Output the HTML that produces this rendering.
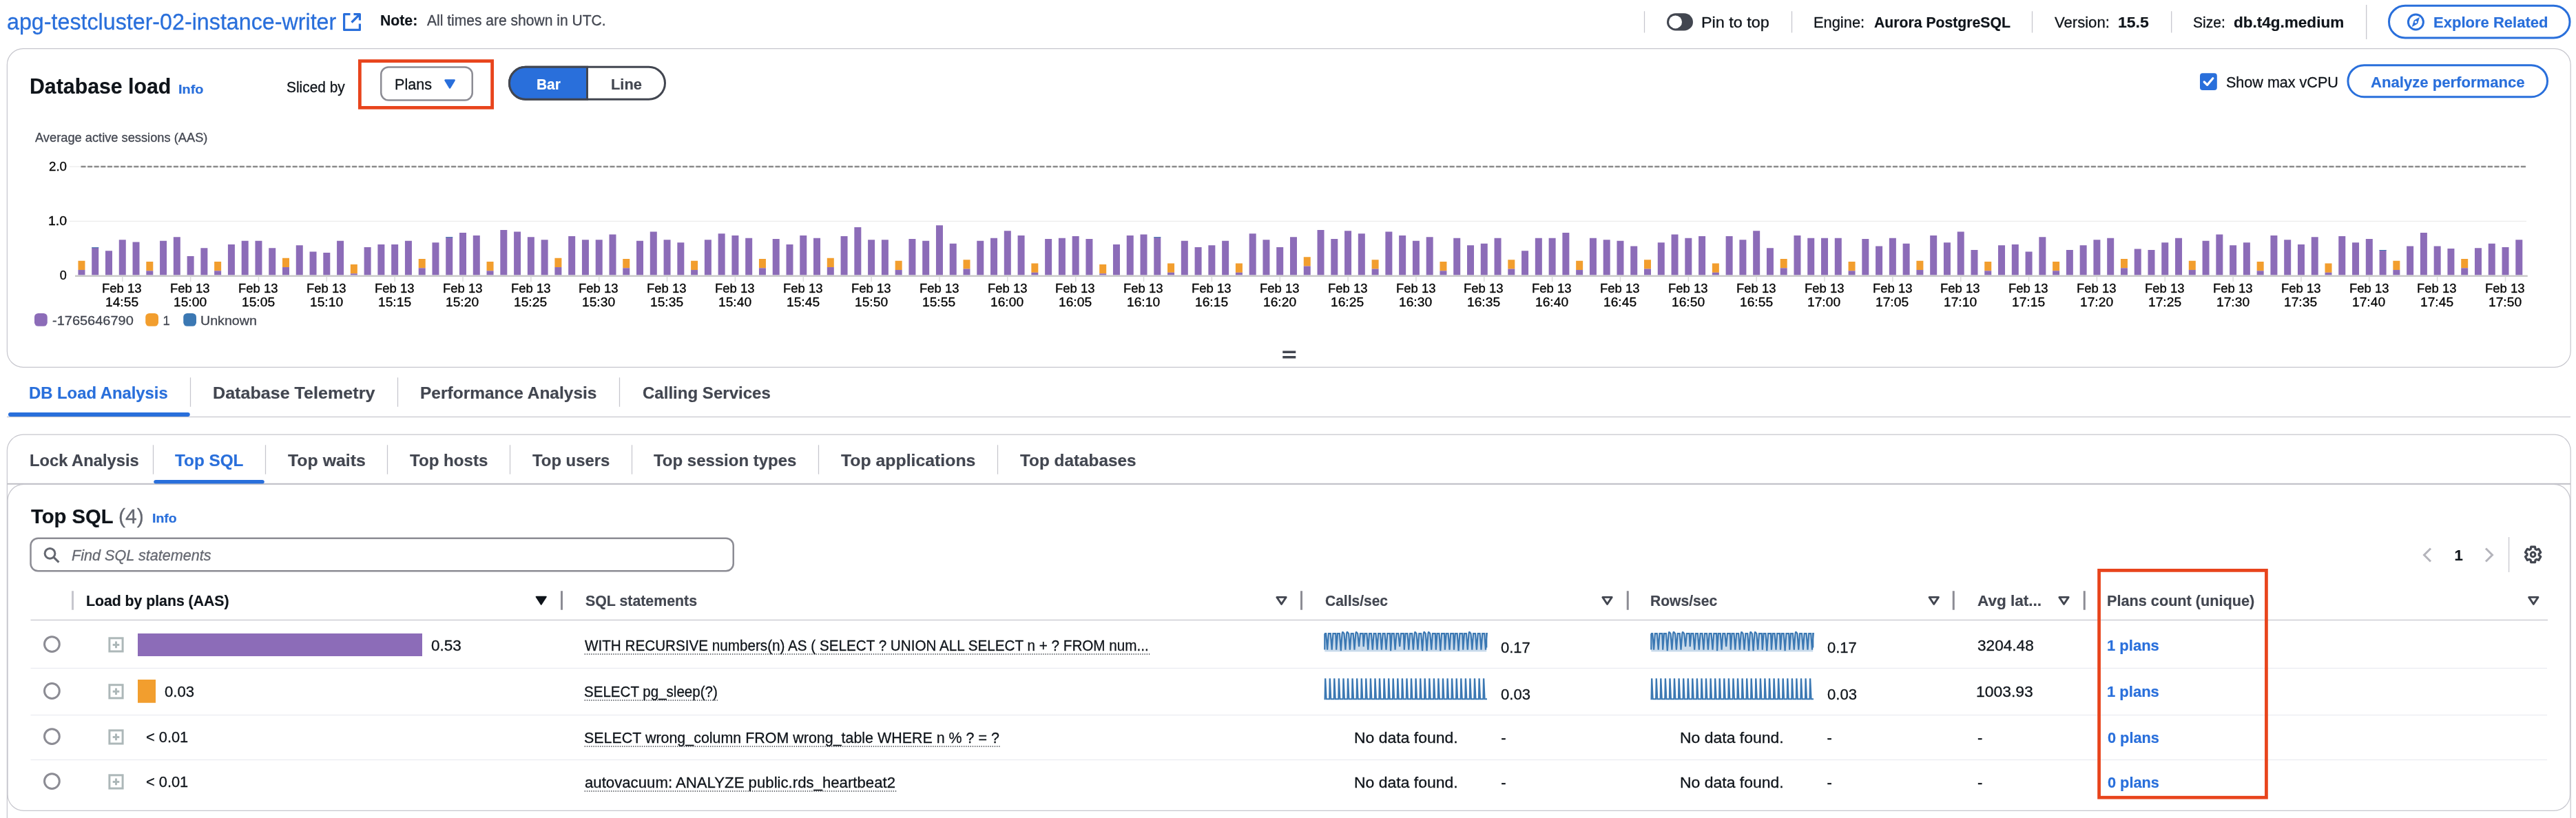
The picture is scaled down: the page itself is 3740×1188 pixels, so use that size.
<!DOCTYPE html><html lang="en"><head><meta charset="utf-8"><title>Database load - Top SQL</title><style>

html,body{margin:0;padding:0;background:#fff;}
body{width:3740px;height:1188px;position:relative;overflow:hidden;font-family:"Liberation Sans",Arial,sans-serif;}
.a{position:absolute;box-sizing:border-box;}
.t{white-space:pre;}

</style></head><body>
<svg class="a" style="left:0;top:0" width="3740" height="1188" viewBox="0 0 3740 1188">
<g transform="translate(496.00 17.00)"><path d="M12.5 3.6H3.6V26.4H26.4V17.5" fill="none" stroke="#296fdb" stroke-width="3.2" stroke-linejoin="round"/><path d="M17.5 3.6H26.4V12.5M26.4 3.6L14.5 15.5" fill="none" stroke="#296fdb" stroke-width="3.2" stroke-linejoin="round"/></g>
<rect x="2386.88" y="16.25" width="1.25" height="31.25" rx="0.00" fill="#c6c6cd" />
<rect x="2600.88" y="16.25" width="1.25" height="31.25" rx="0.00" fill="#c6c6cd" />
<rect x="2949.88" y="16.25" width="1.25" height="31.25" rx="0.00" fill="#c6c6cd" />
<rect x="3152.07" y="16.25" width="1.25" height="31.25" rx="0.00" fill="#c6c6cd" />
<rect x="3435.07" y="7.00" width="1.25" height="50.00" rx="0.00" fill="#c6c6cd" />
<rect x="2420.00" y="19.25" width="38.00" height="25.25" rx="13.00" fill="#424650" />
<rect x="2423.00" y="22.40" width="19.00" height="19.00" rx="10.00" fill="#fff" />
<rect x="3468.50" y="8.30" width="262.50" height="46.70" rx="23.50" fill="#fff" stroke="#296fdb" stroke-width="3" />
<g transform="translate(3493.40 18.00)"><circle cx="14" cy="14" r="11" fill="none" stroke="#296fdb" stroke-width="3"/><path d="M19 7.6L16.3 16.3L9 20.4L11.7 11.7Z" fill="#296fdb" stroke="#296fdb" stroke-width="0.8" stroke-linejoin="round"/><circle cx="14" cy="14" r="1.8" fill="#fff"/></g>
<rect x="10.35" y="70.60" width="3721.80" height="462.80" rx="23.40" fill="#fff" stroke="#c6c6cd" stroke-width="1.2" />
<rect x="522.38" y="88.62" width="192.25" height="67.75" rx="0.00" fill="none" stroke="#e8441c" stroke-width="4.75" />
<rect x="553.25" y="97.50" width="132.50" height="48.00" rx="10.75" fill="#fff" stroke="#8c8c94" stroke-width="2.5" />
<g transform="translate(643.00 113.00)"><path d="M3.6 3.6H16.6L10.1 14.4Z" fill="#296fdb" stroke="#296fdb" stroke-width="2.6" stroke-linejoin="round"/></g>
<rect x="739.50" y="97.25" width="226.00" height="47.00" rx="23.50" fill="#fff" stroke="#424650" stroke-width="3" />
<path d="M852.5 97.25H763A23.5 23.5 0 0 0 763 144.25H852.5Z" fill="#296fdb" stroke="#424650" stroke-width="3"/>
<rect x="3194.00" y="106.20" width="24.80" height="24.80" rx="4.00" fill="#296fdb" />
<g transform="translate(3194.00 106.20)"><path d="M6.2 12.8L10.6 17.2L18.8 7.6" fill="none" stroke="#fff" stroke-width="3.2" stroke-linecap="round" stroke-linejoin="round"/></g>
<rect x="3408.90" y="94.70" width="289.60" height="46.00" rx="23.50" fill="#fff" stroke="#296fdb" stroke-width="3" />
<rect x="101.00" y="241.50" width="3567.00" height="1.00" rx="0.00" fill="#e6e6e6" />
<rect x="101.00" y="320.75" width="3567.00" height="1.00" rx="0.00" fill="#e6e6e6" />
<g transform="translate(0.00 0.00)"><line x1="117.5" y1="242" x2="3668" y2="242" stroke="#8a8a8a" stroke-width="2.3" stroke-dasharray="7 2.6"/><rect x="113.45" y="378.75" width="10" height="13.30" fill="#f29e2e"/><rect x="113.45" y="392.05" width="10" height="7.45" fill="#8c6cb8"/><rect x="133.22" y="359.25" width="10" height="40.25" fill="#8c6cb8"/><rect x="133.22" y="359.25" width="10" height="1" fill="#3b78b3"/><rect x="152.99" y="364.25" width="10" height="35.25" fill="#8c6cb8"/><rect x="172.76" y="348.25" width="10" height="51.25" fill="#8c6cb8"/><rect x="192.53" y="351.50" width="10" height="48.00" fill="#8c6cb8"/><rect x="212.30" y="380.00" width="10" height="13.30" fill="#f29e2e"/><rect x="212.30" y="393.30" width="10" height="6.20" fill="#8c6cb8"/><rect x="232.07" y="349.75" width="10" height="49.75" fill="#8c6cb8"/><rect x="251.84" y="344.25" width="10" height="55.25" fill="#8c6cb8"/><rect x="271.61" y="372.00" width="10" height="27.50" fill="#8c6cb8"/><rect x="291.38" y="360.25" width="10" height="39.25" fill="#8c6cb8"/><rect x="311.15" y="380.00" width="10" height="13.30" fill="#f29e2e"/><rect x="311.15" y="393.30" width="10" height="6.20" fill="#8c6cb8"/><rect x="330.92" y="355.00" width="10" height="44.50" fill="#8c6cb8"/><rect x="350.69" y="349.75" width="10" height="49.75" fill="#8c6cb8"/><rect x="370.46" y="349.75" width="10" height="49.75" fill="#8c6cb8"/><rect x="390.23" y="360.25" width="10" height="39.25" fill="#8c6cb8"/><rect x="410.00" y="374.75" width="10" height="13.30" fill="#f29e2e"/><rect x="410.00" y="388.05" width="10" height="11.45" fill="#8c6cb8"/><rect x="429.77" y="356.25" width="10" height="43.25" fill="#8c6cb8"/><rect x="449.54" y="365.50" width="10" height="34.00" fill="#8c6cb8"/><rect x="469.31" y="367.00" width="10" height="32.50" fill="#8c6cb8"/><rect x="489.08" y="349.75" width="10" height="49.75" fill="#8c6cb8"/><rect x="508.85" y="384.00" width="10" height="13.30" fill="#f29e2e"/><rect x="508.85" y="397.30" width="10" height="2.20" fill="#8c6cb8"/><rect x="528.62" y="359.00" width="10" height="40.50" fill="#8c6cb8"/><rect x="548.39" y="355.00" width="10" height="44.50" fill="#8c6cb8"/><rect x="568.16" y="355.00" width="10" height="44.50" fill="#8c6cb8"/><rect x="587.93" y="349.75" width="10" height="49.75" fill="#8c6cb8"/><rect x="607.70" y="376.00" width="10" height="13.30" fill="#f29e2e"/><rect x="607.70" y="389.30" width="10" height="10.20" fill="#8c6cb8"/><rect x="627.47" y="352.25" width="10" height="47.25" fill="#8c6cb8"/><rect x="647.24" y="344.25" width="10" height="55.25" fill="#8c6cb8"/><rect x="647.24" y="344.25" width="10" height="1" fill="#3b78b3"/><rect x="667.01" y="338.00" width="10" height="61.50" fill="#8c6cb8"/><rect x="686.78" y="342.00" width="10" height="57.50" fill="#8c6cb8"/><rect x="706.55" y="380.00" width="10" height="13.30" fill="#f29e2e"/><rect x="706.55" y="393.30" width="10" height="6.20" fill="#8c6cb8"/><rect x="726.32" y="334.00" width="10" height="65.50" fill="#8c6cb8"/><rect x="746.09" y="336.50" width="10" height="63.00" fill="#8c6cb8"/><rect x="765.86" y="344.25" width="10" height="55.25" fill="#8c6cb8"/><rect x="785.63" y="348.25" width="10" height="51.25" fill="#8c6cb8"/><rect x="805.40" y="374.75" width="10" height="13.30" fill="#f29e2e"/><rect x="805.40" y="388.05" width="10" height="11.45" fill="#8c6cb8"/><rect x="825.17" y="343.00" width="10" height="56.50" fill="#8c6cb8"/><rect x="844.94" y="348.25" width="10" height="51.25" fill="#8c6cb8"/><rect x="864.71" y="348.25" width="10" height="51.25" fill="#8c6cb8"/><rect x="884.48" y="340.50" width="10" height="59.00" fill="#8c6cb8"/><rect x="904.25" y="376.00" width="10" height="13.30" fill="#f29e2e"/><rect x="904.25" y="389.30" width="10" height="10.20" fill="#8c6cb8"/><rect x="924.02" y="349.75" width="10" height="49.75" fill="#8c6cb8"/><rect x="943.79" y="336.50" width="10" height="63.00" fill="#8c6cb8"/><rect x="963.56" y="348.25" width="10" height="51.25" fill="#8c6cb8"/><rect x="983.33" y="352.25" width="10" height="47.25" fill="#8c6cb8"/><rect x="1003.10" y="378.75" width="10" height="13.30" fill="#f29e2e"/><rect x="1003.10" y="392.05" width="10" height="7.45" fill="#8c6cb8"/><rect x="1022.87" y="348.25" width="10" height="51.25" fill="#8c6cb8"/><rect x="1042.64" y="339.25" width="10" height="60.25" fill="#8c6cb8"/><rect x="1062.41" y="342.00" width="10" height="57.50" fill="#8c6cb8"/><rect x="1082.18" y="345.75" width="10" height="53.75" fill="#8c6cb8"/><rect x="1101.95" y="376.00" width="10" height="13.30" fill="#f29e2e"/><rect x="1101.95" y="389.30" width="10" height="10.20" fill="#8c6cb8"/><rect x="1121.72" y="347.00" width="10" height="52.50" fill="#8c6cb8"/><rect x="1141.49" y="355.00" width="10" height="44.50" fill="#8c6cb8"/><rect x="1161.26" y="342.00" width="10" height="57.50" fill="#8c6cb8"/><rect x="1181.03" y="345.75" width="10" height="53.75" fill="#8c6cb8"/><rect x="1200.80" y="374.75" width="10" height="13.30" fill="#f29e2e"/><rect x="1200.80" y="388.05" width="10" height="11.45" fill="#8c6cb8"/><rect x="1220.57" y="343.00" width="10" height="56.50" fill="#8c6cb8"/><rect x="1240.34" y="330.00" width="10" height="69.50" fill="#8c6cb8"/><rect x="1260.11" y="348.25" width="10" height="51.25" fill="#8c6cb8"/><rect x="1279.88" y="348.25" width="10" height="51.25" fill="#8c6cb8"/><rect x="1299.65" y="378.75" width="10" height="13.30" fill="#f29e2e"/><rect x="1299.65" y="392.05" width="10" height="7.45" fill="#8c6cb8"/><rect x="1319.42" y="347.00" width="10" height="52.50" fill="#8c6cb8"/><rect x="1339.19" y="349.75" width="10" height="49.75" fill="#8c6cb8"/><rect x="1358.96" y="327.25" width="10" height="72.25" fill="#8c6cb8"/><rect x="1378.73" y="353.75" width="10" height="45.75" fill="#8c6cb8"/><rect x="1398.50" y="377.25" width="10" height="13.30" fill="#f29e2e"/><rect x="1398.50" y="390.55" width="10" height="8.95" fill="#8c6cb8"/><rect x="1418.27" y="349.75" width="10" height="49.75" fill="#8c6cb8"/><rect x="1438.04" y="345.75" width="10" height="53.75" fill="#8c6cb8"/><rect x="1457.81" y="335.25" width="10" height="64.25" fill="#8c6cb8"/><rect x="1477.58" y="342.00" width="10" height="57.50" fill="#8c6cb8"/><rect x="1497.35" y="382.50" width="10" height="13.30" fill="#f29e2e"/><rect x="1497.35" y="395.80" width="10" height="3.70" fill="#8c6cb8"/><rect x="1517.12" y="347.00" width="10" height="52.50" fill="#8c6cb8"/><rect x="1536.89" y="345.75" width="10" height="53.75" fill="#8c6cb8"/><rect x="1556.66" y="343.00" width="10" height="56.50" fill="#8c6cb8"/><rect x="1576.43" y="347.00" width="10" height="52.50" fill="#8c6cb8"/><rect x="1596.20" y="384.00" width="10" height="13.30" fill="#f29e2e"/><rect x="1596.20" y="397.30" width="10" height="2.20" fill="#8c6cb8"/><rect x="1615.97" y="355.00" width="10" height="44.50" fill="#8c6cb8"/><rect x="1635.74" y="342.00" width="10" height="57.50" fill="#8c6cb8"/><rect x="1655.51" y="340.50" width="10" height="59.00" fill="#8c6cb8"/><rect x="1675.28" y="344.25" width="10" height="55.25" fill="#8c6cb8"/><rect x="1675.28" y="344.25" width="10" height="1" fill="#3b78b3"/><rect x="1695.05" y="382.50" width="10" height="13.30" fill="#f29e2e"/><rect x="1695.05" y="395.80" width="10" height="3.70" fill="#8c6cb8"/><rect x="1714.82" y="349.75" width="10" height="49.75" fill="#8c6cb8"/><rect x="1734.59" y="359.00" width="10" height="40.50" fill="#8c6cb8"/><rect x="1754.36" y="356.25" width="10" height="43.25" fill="#8c6cb8"/><rect x="1774.13" y="349.75" width="10" height="49.75" fill="#8c6cb8"/><rect x="1793.90" y="382.50" width="10" height="13.30" fill="#f29e2e"/><rect x="1793.90" y="395.80" width="10" height="3.70" fill="#8c6cb8"/><rect x="1813.67" y="339.25" width="10" height="60.25" fill="#8c6cb8"/><rect x="1833.44" y="348.25" width="10" height="51.25" fill="#8c6cb8"/><rect x="1853.21" y="359.00" width="10" height="40.50" fill="#8c6cb8"/><rect x="1872.98" y="344.25" width="10" height="55.25" fill="#8c6cb8"/><rect x="1892.75" y="373.25" width="10" height="13.30" fill="#f29e2e"/><rect x="1892.75" y="386.55" width="10" height="12.95" fill="#8c6cb8"/><rect x="1912.52" y="334.00" width="10" height="65.50" fill="#8c6cb8"/><rect x="1932.29" y="347.00" width="10" height="52.50" fill="#8c6cb8"/><rect x="1952.06" y="335.25" width="10" height="64.25" fill="#8c6cb8"/><rect x="1971.83" y="339.25" width="10" height="60.25" fill="#8c6cb8"/><rect x="1991.60" y="377.25" width="10" height="13.30" fill="#f29e2e"/><rect x="1991.60" y="390.55" width="10" height="8.95" fill="#8c6cb8"/><rect x="2011.37" y="336.50" width="10" height="63.00" fill="#8c6cb8"/><rect x="2031.14" y="342.00" width="10" height="57.50" fill="#8c6cb8"/><rect x="2050.91" y="349.75" width="10" height="49.75" fill="#8c6cb8"/><rect x="2070.68" y="344.25" width="10" height="55.25" fill="#8c6cb8"/><rect x="2090.45" y="380.00" width="10" height="13.30" fill="#f29e2e"/><rect x="2090.45" y="393.30" width="10" height="6.20" fill="#8c6cb8"/><rect x="2110.22" y="345.75" width="10" height="53.75" fill="#8c6cb8"/><rect x="2129.99" y="356.25" width="10" height="43.25" fill="#8c6cb8"/><rect x="2149.76" y="353.75" width="10" height="45.75" fill="#8c6cb8"/><rect x="2169.53" y="345.75" width="10" height="53.75" fill="#8c6cb8"/><rect x="2189.30" y="377.25" width="10" height="13.30" fill="#f29e2e"/><rect x="2189.30" y="390.55" width="10" height="8.95" fill="#8c6cb8"/><rect x="2209.07" y="364.25" width="10" height="35.25" fill="#8c6cb8"/><rect x="2228.84" y="345.75" width="10" height="53.75" fill="#8c6cb8"/><rect x="2248.61" y="345.75" width="10" height="53.75" fill="#8c6cb8"/><rect x="2268.38" y="338.00" width="10" height="61.50" fill="#8c6cb8"/><rect x="2288.15" y="378.75" width="10" height="13.30" fill="#f29e2e"/><rect x="2288.15" y="392.05" width="10" height="7.45" fill="#8c6cb8"/><rect x="2307.92" y="345.75" width="10" height="53.75" fill="#8c6cb8"/><rect x="2327.69" y="348.25" width="10" height="51.25" fill="#8c6cb8"/><rect x="2347.46" y="349.75" width="10" height="49.75" fill="#8c6cb8"/><rect x="2367.23" y="357.50" width="10" height="42.00" fill="#8c6cb8"/><rect x="2387.00" y="377.25" width="10" height="13.30" fill="#f29e2e"/><rect x="2387.00" y="390.55" width="10" height="8.95" fill="#8c6cb8"/><rect x="2406.77" y="352.25" width="10" height="47.25" fill="#8c6cb8"/><rect x="2426.54" y="340.50" width="10" height="59.00" fill="#8c6cb8"/><rect x="2446.31" y="345.75" width="10" height="53.75" fill="#8c6cb8"/><rect x="2466.08" y="343.00" width="10" height="56.50" fill="#8c6cb8"/><rect x="2485.85" y="382.50" width="10" height="13.30" fill="#f29e2e"/><rect x="2485.85" y="395.80" width="10" height="3.70" fill="#8c6cb8"/><rect x="2505.62" y="343.00" width="10" height="56.50" fill="#8c6cb8"/><rect x="2525.39" y="348.25" width="10" height="51.25" fill="#8c6cb8"/><rect x="2545.16" y="335.25" width="10" height="64.25" fill="#8c6cb8"/><rect x="2564.93" y="360.25" width="10" height="39.25" fill="#8c6cb8"/><rect x="2584.70" y="376.00" width="10" height="13.30" fill="#f29e2e"/><rect x="2584.70" y="389.30" width="10" height="10.20" fill="#8c6cb8"/><rect x="2604.47" y="342.00" width="10" height="57.50" fill="#8c6cb8"/><rect x="2624.24" y="345.75" width="10" height="53.75" fill="#8c6cb8"/><rect x="2644.01" y="345.75" width="10" height="53.75" fill="#8c6cb8"/><rect x="2663.78" y="345.75" width="10" height="53.75" fill="#8c6cb8"/><rect x="2683.55" y="380.00" width="10" height="13.30" fill="#f29e2e"/><rect x="2683.55" y="393.30" width="10" height="6.20" fill="#8c6cb8"/><rect x="2703.32" y="347.00" width="10" height="52.50" fill="#8c6cb8"/><rect x="2723.09" y="357.50" width="10" height="42.00" fill="#8c6cb8"/><rect x="2742.86" y="345.75" width="10" height="53.75" fill="#8c6cb8"/><rect x="2762.63" y="353.75" width="10" height="45.75" fill="#8c6cb8"/><rect x="2782.40" y="378.75" width="10" height="13.30" fill="#f29e2e"/><rect x="2782.40" y="392.05" width="10" height="7.45" fill="#8c6cb8"/><rect x="2802.17" y="342.00" width="10" height="57.50" fill="#8c6cb8"/><rect x="2821.94" y="352.25" width="10" height="47.25" fill="#8c6cb8"/><rect x="2841.71" y="336.50" width="10" height="63.00" fill="#8c6cb8"/><rect x="2861.48" y="363.00" width="10" height="36.50" fill="#8c6cb8"/><rect x="2881.25" y="380.00" width="10" height="13.30" fill="#f29e2e"/><rect x="2881.25" y="393.30" width="10" height="6.20" fill="#8c6cb8"/><rect x="2901.02" y="356.25" width="10" height="43.25" fill="#8c6cb8"/><rect x="2920.79" y="355.00" width="10" height="44.50" fill="#8c6cb8"/><rect x="2940.56" y="365.50" width="10" height="34.00" fill="#8c6cb8"/><rect x="2960.33" y="344.25" width="10" height="55.25" fill="#8c6cb8"/><rect x="2980.10" y="380.00" width="10" height="13.30" fill="#f29e2e"/><rect x="2980.10" y="393.30" width="10" height="6.20" fill="#8c6cb8"/><rect x="2999.87" y="363.00" width="10" height="36.50" fill="#8c6cb8"/><rect x="3019.64" y="356.25" width="10" height="43.25" fill="#8c6cb8"/><rect x="3039.41" y="348.25" width="10" height="51.25" fill="#8c6cb8"/><rect x="3059.18" y="345.75" width="10" height="53.75" fill="#8c6cb8"/><rect x="3078.95" y="376.00" width="10" height="13.30" fill="#f29e2e"/><rect x="3078.95" y="389.30" width="10" height="10.20" fill="#8c6cb8"/><rect x="3098.72" y="361.50" width="10" height="38.00" fill="#8c6cb8"/><rect x="3118.49" y="363.00" width="10" height="36.50" fill="#8c6cb8"/><rect x="3138.26" y="352.25" width="10" height="47.25" fill="#8c6cb8"/><rect x="3158.03" y="345.75" width="10" height="53.75" fill="#8c6cb8"/><rect x="3177.80" y="378.75" width="10" height="13.30" fill="#f29e2e"/><rect x="3177.80" y="392.05" width="10" height="7.45" fill="#8c6cb8"/><rect x="3197.57" y="349.75" width="10" height="49.75" fill="#8c6cb8"/><rect x="3217.34" y="340.50" width="10" height="59.00" fill="#8c6cb8"/><rect x="3237.11" y="356.25" width="10" height="43.25" fill="#8c6cb8"/><rect x="3256.88" y="352.25" width="10" height="47.25" fill="#8c6cb8"/><rect x="3276.65" y="380.00" width="10" height="13.30" fill="#f29e2e"/><rect x="3276.65" y="393.30" width="10" height="6.20" fill="#8c6cb8"/><rect x="3296.42" y="342.00" width="10" height="57.50" fill="#8c6cb8"/><rect x="3316.19" y="348.25" width="10" height="51.25" fill="#8c6cb8"/><rect x="3335.96" y="355.00" width="10" height="44.50" fill="#8c6cb8"/><rect x="3355.73" y="344.25" width="10" height="55.25" fill="#8c6cb8"/><rect x="3375.50" y="382.50" width="10" height="13.30" fill="#f29e2e"/><rect x="3375.50" y="395.80" width="10" height="3.70" fill="#8c6cb8"/><rect x="3395.27" y="343.00" width="10" height="56.50" fill="#8c6cb8"/><rect x="3415.04" y="352.25" width="10" height="47.25" fill="#8c6cb8"/><rect x="3434.81" y="347.00" width="10" height="52.50" fill="#8c6cb8"/><rect x="3454.58" y="363.00" width="10" height="36.50" fill="#8c6cb8"/><rect x="3454.58" y="363.00" width="10" height="1" fill="#3b78b3"/><rect x="3474.35" y="378.75" width="10" height="13.30" fill="#f29e2e"/><rect x="3474.35" y="392.05" width="10" height="7.45" fill="#8c6cb8"/><rect x="3494.12" y="357.50" width="10" height="42.00" fill="#8c6cb8"/><rect x="3513.89" y="338.00" width="10" height="61.50" fill="#8c6cb8"/><rect x="3533.66" y="357.50" width="10" height="42.00" fill="#8c6cb8"/><rect x="3553.43" y="361.00" width="10" height="38.50" fill="#8c6cb8"/><rect x="3573.20" y="376.00" width="10" height="13.30" fill="#f29e2e"/><rect x="3573.20" y="389.30" width="10" height="10.20" fill="#8c6cb8"/><rect x="3592.97" y="360.25" width="10" height="39.25" fill="#8c6cb8"/><rect x="3612.74" y="353.75" width="10" height="45.75" fill="#8c6cb8"/><rect x="3632.51" y="359.00" width="10" height="40.50" fill="#8c6cb8"/><rect x="3652.28" y="348.25" width="10" height="51.25" fill="#8c6cb8"/><rect x="109" y="399.6" width="3560.75" height="2.4" fill="#c8c8c8"/><rect x="177.01" y="401.5" width="1.5" height="7.5" fill="#dcdcdc"/><rect x="275.86" y="401.5" width="1.5" height="7.5" fill="#dcdcdc"/><rect x="374.71" y="401.5" width="1.5" height="7.5" fill="#dcdcdc"/><rect x="473.56" y="401.5" width="1.5" height="7.5" fill="#dcdcdc"/><rect x="572.41" y="401.5" width="1.5" height="7.5" fill="#dcdcdc"/><rect x="671.26" y="401.5" width="1.5" height="7.5" fill="#dcdcdc"/><rect x="770.11" y="401.5" width="1.5" height="7.5" fill="#dcdcdc"/><rect x="868.96" y="401.5" width="1.5" height="7.5" fill="#dcdcdc"/><rect x="967.81" y="401.5" width="1.5" height="7.5" fill="#dcdcdc"/><rect x="1066.66" y="401.5" width="1.5" height="7.5" fill="#dcdcdc"/><rect x="1165.51" y="401.5" width="1.5" height="7.5" fill="#dcdcdc"/><rect x="1264.36" y="401.5" width="1.5" height="7.5" fill="#dcdcdc"/><rect x="1363.21" y="401.5" width="1.5" height="7.5" fill="#dcdcdc"/><rect x="1462.06" y="401.5" width="1.5" height="7.5" fill="#dcdcdc"/><rect x="1560.91" y="401.5" width="1.5" height="7.5" fill="#dcdcdc"/><rect x="1659.76" y="401.5" width="1.5" height="7.5" fill="#dcdcdc"/><rect x="1758.61" y="401.5" width="1.5" height="7.5" fill="#dcdcdc"/><rect x="1857.46" y="401.5" width="1.5" height="7.5" fill="#dcdcdc"/><rect x="1956.31" y="401.5" width="1.5" height="7.5" fill="#dcdcdc"/><rect x="2055.16" y="401.5" width="1.5" height="7.5" fill="#dcdcdc"/><rect x="2154.01" y="401.5" width="1.5" height="7.5" fill="#dcdcdc"/><rect x="2252.86" y="401.5" width="1.5" height="7.5" fill="#dcdcdc"/><rect x="2351.71" y="401.5" width="1.5" height="7.5" fill="#dcdcdc"/><rect x="2450.56" y="401.5" width="1.5" height="7.5" fill="#dcdcdc"/><rect x="2549.41" y="401.5" width="1.5" height="7.5" fill="#dcdcdc"/><rect x="2648.26" y="401.5" width="1.5" height="7.5" fill="#dcdcdc"/><rect x="2747.11" y="401.5" width="1.5" height="7.5" fill="#dcdcdc"/><rect x="2845.96" y="401.5" width="1.5" height="7.5" fill="#dcdcdc"/><rect x="2944.81" y="401.5" width="1.5" height="7.5" fill="#dcdcdc"/><rect x="3043.66" y="401.5" width="1.5" height="7.5" fill="#dcdcdc"/><rect x="3142.51" y="401.5" width="1.5" height="7.5" fill="#dcdcdc"/><rect x="3241.36" y="401.5" width="1.5" height="7.5" fill="#dcdcdc"/><rect x="3340.21" y="401.5" width="1.5" height="7.5" fill="#dcdcdc"/><rect x="3439.06" y="401.5" width="1.5" height="7.5" fill="#dcdcdc"/><rect x="3537.91" y="401.5" width="1.5" height="7.5" fill="#dcdcdc"/><rect x="3636.76" y="401.5" width="1.5" height="7.5" fill="#dcdcdc"/></g>
<rect x="50.00" y="455.00" width="18.75" height="18.75" rx="5.50" fill="#8c6cb8" />
<rect x="211.25" y="455.00" width="18.75" height="18.75" rx="5.50" fill="#f29e2e" />
<rect x="266.25" y="455.00" width="18.75" height="18.75" rx="5.50" fill="#3b78b3" />
<rect x="1862.25" y="509.50" width="19.00" height="3.50" rx="0.00" fill="#424650" />
<rect x="1862.25" y="517.00" width="19.00" height="3.50" rx="0.00" fill="#424650" />
<rect x="275.88" y="548.25" width="1.25" height="42.50" rx="0.00" fill="#c6c6cd" />
<rect x="576.88" y="548.25" width="1.25" height="42.50" rx="0.00" fill="#c6c6cd" />
<rect x="898.88" y="548.25" width="1.25" height="42.50" rx="0.00" fill="#c6c6cd" />
<rect x="10.00" y="604.90" width="3722.00" height="1.20" rx="0.00" fill="#c6c6cd" />
<rect x="12.00" y="599.00" width="263.75" height="6.00" rx="3.00" fill="#296fdb" />
<rect x="10.35" y="631.10" width="3721.80" height="618.80" rx="23.40" fill="#fff" stroke="#c6c6cd" stroke-width="1.2" />
<rect x="221.88" y="646.25" width="1.25" height="42.50" rx="0.00" fill="#c6c6cd" />
<rect x="384.88" y="646.25" width="1.25" height="42.50" rx="0.00" fill="#c6c6cd" />
<rect x="561.88" y="646.25" width="1.25" height="42.50" rx="0.00" fill="#c6c6cd" />
<rect x="739.88" y="646.25" width="1.25" height="42.50" rx="0.00" fill="#c6c6cd" />
<rect x="916.88" y="646.25" width="1.25" height="42.50" rx="0.00" fill="#c6c6cd" />
<rect x="1187.88" y="646.25" width="1.25" height="42.50" rx="0.00" fill="#c6c6cd" />
<rect x="1447.88" y="646.25" width="1.25" height="42.50" rx="0.00" fill="#c6c6cd" />
<rect x="10.50" y="701.80" width="3721.50" height="1.90" rx="0.00" fill="#bcbcc4" />
<rect x="223.25" y="697.00" width="160.50" height="5.50" rx="3.00" fill="#296fdb" />
<rect x="11.10" y="703.35" width="3720.30" height="474.05" rx="23.40" fill="#fff" stroke="#c6c6cd" stroke-width="1.2" />
<rect x="44.50" y="781.75" width="1020.25" height="47.50" rx="10.75" fill="#fff" stroke="#8c8c94" stroke-width="2.5" />
<g transform="translate(60.00 791.00)"><circle cx="12.5" cy="12.8" r="7.4" fill="none" stroke="#656871" stroke-width="3"/><path d="M18 18.4L25.4 25.6" stroke="#656871" stroke-width="3.2" fill="none"/></g>
<g transform="translate(3514.00 791.00)"><path d="M15 5.5L5.5 15L15 24.5" fill="none" stroke="#b4b4bb" stroke-width="3"/></g>
<g transform="translate(3604.00 791.00)"><path d="M5 5.5L14.5 15L5 24.5" fill="none" stroke="#b4b4bb" stroke-width="3"/></g>
<rect x="3641.97" y="780.00" width="1.25" height="51.00" rx="0.00" fill="#c6c6cd" />
<g transform="translate(3662.60 790.40)"><path d="M12.13 3.76L17.87 3.76L18.43 7.11L20.12 8.09L23.30 6.89L26.17 11.87L23.54 14.03L23.54 15.97L26.17 18.13L23.30 23.11L20.12 21.91L18.43 22.89L17.87 26.24L12.13 26.24L11.57 22.89L9.88 21.91L6.70 23.11L3.83 18.13L6.46 15.97L6.46 14.03L3.83 11.87L6.70 6.89L9.88 8.09L11.57 7.11Z" fill="none" stroke="#424650" stroke-width="3.2" stroke-linejoin="round"/><circle cx="15" cy="15" r="3.3" fill="none" stroke="#424650" stroke-width="3"/></g>
<rect x="104.00" y="858.25" width="3.00" height="27.50" rx="0.00" fill="#c6c6cd" />
<g transform="translate(775.00 863.00)"><path d="M3.6 3.8H17.8L10.7 14.6Z" fill="#0f141a" stroke="#0f141a" stroke-width="2" stroke-linejoin="round"/></g>
<rect x="814.00" y="858.25" width="3.00" height="27.50" rx="0.00" fill="#8c8c94" />
<rect x="1888.00" y="858.25" width="3.00" height="27.50" rx="0.00" fill="#8c8c94" />
<rect x="2361.75" y="858.25" width="3.00" height="27.50" rx="0.00" fill="#8c8c94" />
<rect x="2834.75" y="858.25" width="3.00" height="27.50" rx="0.00" fill="#8c8c94" />
<rect x="3024.75" y="858.25" width="3.00" height="27.50" rx="0.00" fill="#8c8c94" />
<g transform="translate(1850.00 863.00)"><path d="M3.8 4.4H17.2L10.5 14.4Z" fill="none" stroke="#424650" stroke-width="2.8" stroke-linejoin="round"/></g>
<g transform="translate(2323.00 863.00)"><path d="M3.8 4.4H17.2L10.5 14.4Z" fill="none" stroke="#424650" stroke-width="2.8" stroke-linejoin="round"/></g>
<g transform="translate(2797.25 863.00)"><path d="M3.8 4.4H17.2L10.5 14.4Z" fill="none" stroke="#424650" stroke-width="2.8" stroke-linejoin="round"/></g>
<g transform="translate(2986.00 863.00)"><path d="M3.8 4.4H17.2L10.5 14.4Z" fill="none" stroke="#424650" stroke-width="2.8" stroke-linejoin="round"/></g>
<g transform="translate(3667.80 863.00)"><path d="M3.8 4.4H17.2L10.5 14.4Z" fill="none" stroke="#424650" stroke-width="2.8" stroke-linejoin="round"/></g>
<rect x="44.50" y="899.85" width="3654.50" height="1.30" rx="0.00" fill="#c6c6cd" />
<rect x="44.50" y="969.90" width="3653.50" height="1.20" rx="0.00" fill="#e9ebf0" />
<rect x="44.50" y="1037.90" width="3653.50" height="1.20" rx="0.00" fill="#e9ebf0" />
<rect x="44.50" y="1102.90" width="3653.50" height="1.20" rx="0.00" fill="#e9ebf0" />
<rect x="64.50" y="924.70" width="21.80" height="21.80" rx="11.50" fill="#fff" stroke="#8c8c94" stroke-width="3" />
<g transform="translate(157.40 925.30)"><rect x="1.5" y="1.5" width="19.2" height="19.2" fill="#fff" stroke="#adb8b9" stroke-width="3"/><path d="M6.3 11.1H15.9M11.1 6.3V15.9" stroke="#adb8b9" stroke-width="3" fill="none"/></g>
<rect x="64.50" y="992.60" width="21.80" height="21.80" rx="11.50" fill="#fff" stroke="#8c8c94" stroke-width="3" />
<g transform="translate(157.40 993.20)"><rect x="1.5" y="1.5" width="19.2" height="19.2" fill="#fff" stroke="#adb8b9" stroke-width="3"/><path d="M6.3 11.1H15.9M11.1 6.3V15.9" stroke="#adb8b9" stroke-width="3" fill="none"/></g>
<rect x="64.50" y="1058.70" width="21.80" height="21.80" rx="11.50" fill="#fff" stroke="#8c8c94" stroke-width="3" />
<g transform="translate(157.40 1059.30)"><rect x="1.5" y="1.5" width="19.2" height="19.2" fill="#fff" stroke="#adb8b9" stroke-width="3"/><path d="M6.3 11.1H15.9M11.1 6.3V15.9" stroke="#adb8b9" stroke-width="3" fill="none"/></g>
<rect x="64.50" y="1123.70" width="21.80" height="21.80" rx="11.50" fill="#fff" stroke="#8c8c94" stroke-width="3" />
<g transform="translate(157.40 1124.30)"><rect x="1.5" y="1.5" width="19.2" height="19.2" fill="#fff" stroke="#adb8b9" stroke-width="3"/><path d="M6.3 11.1H15.9M11.1 6.3V15.9" stroke="#adb8b9" stroke-width="3" fill="none"/></g>
<rect x="200.00" y="920.00" width="413.00" height="33.00" rx="0.00" fill="#8c6cb8" />
<rect x="200.00" y="987.00" width="26.00" height="33.75" rx="0.00" fill="#f29e2e" />
<line x1="849.25" y1="950.00" x2="1670.75" y2="950.00" stroke="#1b2028" stroke-width="1.5" stroke-linecap="round" stroke-dasharray="0.1 3.1"/>
<line x1="849.25" y1="1017.00" x2="1041.25" y2="1017.00" stroke="#1b2028" stroke-width="1.5" stroke-linecap="round" stroke-dasharray="0.1 3.1"/>
<line x1="849.25" y1="1084.00" x2="1451.25" y2="1084.00" stroke="#1b2028" stroke-width="1.5" stroke-linecap="round" stroke-dasharray="0.1 3.1"/>
<line x1="849.25" y1="1149.00" x2="1301.25" y2="1149.00" stroke="#1b2028" stroke-width="1.5" stroke-linecap="round" stroke-dasharray="0.1 3.1"/>
<g transform="translate(1922.50 917.00)"><polygon points="0.8,29.6 0.8,26.6 0.8,3.2 0.5,3.2 2.7,3.2 4.6,26.6 6.4,3.2 7.1,3.2 9.3,3.2 11.2,26.6 12.9,3.2 13.6,3.2 16.8,3.2 17.7,26.6 19.5,3.2 20.2,3.2 22.4,3.2 24.3,28.2 26.1,3.2 26.8,0.6 29.0,3.2 30.9,26.6 32.6,3.2 33.3,0.6 35.6,3.2 37.4,26.6 39.2,3.2 39.9,3.2 42.2,3.2 44.0,26.6 45.8,3.2 46.5,0.6 48.7,3.2 50.6,22.1 52.4,3.2 53.1,3.2 56.2,3.2 57.2,22.1 58.9,3.2 59.6,3.2 61.9,3.2 63.7,26.6 65.5,3.2 66.2,3.2 68.4,3.2 70.3,26.6 72.1,3.2 72.8,3.2 75.0,3.2 76.9,26.6 78.6,3.2 79.3,3.2 81.6,3.2 83.4,26.6 85.2,3.2 85.9,3.2 88.1,3.2 90.0,26.6 91.8,3.2 92.5,3.2 95.6,3.2 96.6,28.2 98.3,3.2 99.0,3.2 101.3,3.2 103.1,26.6 104.9,3.2 105.6,3.2 107.8,3.2 109.7,22.1 111.5,3.2 112.2,3.2 115.3,3.2 116.3,26.6 118.0,3.2 118.8,3.2 121.0,3.2 122.8,26.6 124.6,3.2 125.3,3.2 127.6,3.2 129.4,26.6 131.2,3.2 131.9,0.6 134.1,3.2 136.0,26.6 137.8,3.2 138.5,3.2 140.7,3.2 142.6,28.2 144.3,3.2 145.0,0.6 147.3,3.2 149.1,28.2 150.9,3.2 151.6,0.6 153.8,3.2 155.7,26.6 157.5,3.2 158.2,3.2 161.3,3.2 162.3,26.6 164.0,3.2 164.7,3.2 167.0,3.2 168.8,28.2 170.6,3.2 171.3,3.2 174.5,3.2 175.4,26.6 177.2,3.2 177.9,3.2 180.1,3.2 182.0,26.6 183.7,3.2 184.4,3.2 187.6,3.2 188.5,26.6 190.3,3.2 191.0,3.2 193.2,3.2 195.1,28.2 196.9,3.2 197.6,3.2 200.7,3.2 201.7,26.6 203.5,3.2 204.2,3.2 206.4,3.2 208.3,26.6 210.0,3.2 210.7,0.6 213.0,3.2 214.8,26.6 216.6,3.2 217.3,3.2 219.5,3.2 221.4,26.6 223.2,3.2 223.9,3.2 226.1,3.2 228.0,26.6 229.7,3.2 230.4,3.2 232.7,3.2 234.5,26.6 236.3,3.2 235.7,3.2 235.7,23.6 235.7,29.6" fill="#c8daeb"/><polyline points="0.8,26.6 0.8,3.2 0.5,3.2 2.7,3.2 4.6,26.6 6.4,3.2 7.1,3.2 9.3,3.2 11.2,26.6 12.9,3.2 13.6,3.2 16.8,3.2 17.7,26.6 19.5,3.2 20.2,3.2 22.4,3.2 24.3,28.2 26.1,3.2 26.8,0.6 29.0,3.2 30.9,26.6 32.6,3.2 33.3,0.6 35.6,3.2 37.4,26.6 39.2,3.2 39.9,3.2 42.2,3.2 44.0,26.6 45.8,3.2 46.5,0.6 48.7,3.2 50.6,22.1 52.4,3.2 53.1,3.2 56.2,3.2 57.2,22.1 58.9,3.2 59.6,3.2 61.9,3.2 63.7,26.6 65.5,3.2 66.2,3.2 68.4,3.2 70.3,26.6 72.1,3.2 72.8,3.2 75.0,3.2 76.9,26.6 78.6,3.2 79.3,3.2 81.6,3.2 83.4,26.6 85.2,3.2 85.9,3.2 88.1,3.2 90.0,26.6 91.8,3.2 92.5,3.2 95.6,3.2 96.6,28.2 98.3,3.2 99.0,3.2 101.3,3.2 103.1,26.6 104.9,3.2 105.6,3.2 107.8,3.2 109.7,22.1 111.5,3.2 112.2,3.2 115.3,3.2 116.3,26.6 118.0,3.2 118.8,3.2 121.0,3.2 122.8,26.6 124.6,3.2 125.3,3.2 127.6,3.2 129.4,26.6 131.2,3.2 131.9,0.6 134.1,3.2 136.0,26.6 137.8,3.2 138.5,3.2 140.7,3.2 142.6,28.2 144.3,3.2 145.0,0.6 147.3,3.2 149.1,28.2 150.9,3.2 151.6,0.6 153.8,3.2 155.7,26.6 157.5,3.2 158.2,3.2 161.3,3.2 162.3,26.6 164.0,3.2 164.7,3.2 167.0,3.2 168.8,28.2 170.6,3.2 171.3,3.2 174.5,3.2 175.4,26.6 177.2,3.2 177.9,3.2 180.1,3.2 182.0,26.6 183.7,3.2 184.4,3.2 187.6,3.2 188.5,26.6 190.3,3.2 191.0,3.2 193.2,3.2 195.1,28.2 196.9,3.2 197.6,3.2 200.7,3.2 201.7,26.6 203.5,3.2 204.2,3.2 206.4,3.2 208.3,26.6 210.0,3.2 210.7,0.6 213.0,3.2 214.8,26.6 216.6,3.2 217.3,3.2 219.5,3.2 221.4,26.6 223.2,3.2 223.9,3.2 226.1,3.2 228.0,26.6 229.7,3.2 230.4,3.2 232.7,3.2 234.5,26.6 236.3,3.2 235.7,3.2 235.7,23.6" fill="none" stroke="#3b78b3" stroke-width="2.2" stroke-linejoin="miter" stroke-miterlimit="2"/></g>
<g transform="translate(2396.50 917.00)"><polygon points="0.8,29.6 0.8,26.6 0.8,3.2 0.5,3.2 2.7,3.2 4.6,26.6 6.4,3.2 7.1,3.2 9.3,3.2 11.2,26.6 12.9,3.2 13.6,3.2 16.8,3.2 17.7,26.6 19.5,3.2 20.2,3.2 22.4,3.2 24.3,28.2 26.1,3.2 26.8,0.6 29.0,3.2 30.9,26.6 32.6,3.2 33.3,0.6 35.6,3.2 37.4,26.6 39.2,3.2 39.9,3.2 42.2,3.2 44.0,26.6 45.8,3.2 46.5,0.6 48.7,3.2 50.6,22.1 52.4,3.2 53.1,3.2 56.2,3.2 57.2,22.1 58.9,3.2 59.6,3.2 61.9,3.2 63.7,26.6 65.5,3.2 66.2,3.2 68.4,3.2 70.3,26.6 72.1,3.2 72.8,3.2 75.0,3.2 76.9,26.6 78.6,3.2 79.3,3.2 81.6,3.2 83.4,26.6 85.2,3.2 85.9,3.2 88.1,3.2 90.0,26.6 91.8,3.2 92.5,3.2 95.6,3.2 96.6,28.2 98.3,3.2 99.0,3.2 101.3,3.2 103.1,26.6 104.9,3.2 105.6,3.2 107.8,3.2 109.7,22.1 111.5,3.2 112.2,3.2 115.3,3.2 116.3,26.6 118.0,3.2 118.8,3.2 121.0,3.2 122.8,26.6 124.6,3.2 125.3,3.2 127.6,3.2 129.4,26.6 131.2,3.2 131.9,0.6 134.1,3.2 136.0,26.6 137.8,3.2 138.5,3.2 140.7,3.2 142.6,28.2 144.3,3.2 145.0,0.6 147.3,3.2 149.1,28.2 150.9,3.2 151.6,0.6 153.8,3.2 155.7,26.6 157.5,3.2 158.2,3.2 161.3,3.2 162.3,26.6 164.0,3.2 164.7,3.2 167.0,3.2 168.8,28.2 170.6,3.2 171.3,3.2 174.5,3.2 175.4,26.6 177.2,3.2 177.9,3.2 180.1,3.2 182.0,26.6 183.7,3.2 184.4,3.2 187.6,3.2 188.5,26.6 190.3,3.2 191.0,3.2 193.2,3.2 195.1,28.2 196.9,3.2 197.6,3.2 200.7,3.2 201.7,26.6 203.5,3.2 204.2,3.2 206.4,3.2 208.3,26.6 210.0,3.2 210.7,0.6 213.0,3.2 214.8,26.6 216.6,3.2 217.3,3.2 219.5,3.2 221.4,26.6 223.2,3.2 223.9,3.2 226.1,3.2 228.0,26.6 229.7,3.2 230.4,3.2 232.7,3.2 234.5,26.6 236.3,3.2 235.7,3.2 235.7,23.6 235.7,29.6" fill="#c8daeb"/><polyline points="0.8,26.6 0.8,3.2 0.5,3.2 2.7,3.2 4.6,26.6 6.4,3.2 7.1,3.2 9.3,3.2 11.2,26.6 12.9,3.2 13.6,3.2 16.8,3.2 17.7,26.6 19.5,3.2 20.2,3.2 22.4,3.2 24.3,28.2 26.1,3.2 26.8,0.6 29.0,3.2 30.9,26.6 32.6,3.2 33.3,0.6 35.6,3.2 37.4,26.6 39.2,3.2 39.9,3.2 42.2,3.2 44.0,26.6 45.8,3.2 46.5,0.6 48.7,3.2 50.6,22.1 52.4,3.2 53.1,3.2 56.2,3.2 57.2,22.1 58.9,3.2 59.6,3.2 61.9,3.2 63.7,26.6 65.5,3.2 66.2,3.2 68.4,3.2 70.3,26.6 72.1,3.2 72.8,3.2 75.0,3.2 76.9,26.6 78.6,3.2 79.3,3.2 81.6,3.2 83.4,26.6 85.2,3.2 85.9,3.2 88.1,3.2 90.0,26.6 91.8,3.2 92.5,3.2 95.6,3.2 96.6,28.2 98.3,3.2 99.0,3.2 101.3,3.2 103.1,26.6 104.9,3.2 105.6,3.2 107.8,3.2 109.7,22.1 111.5,3.2 112.2,3.2 115.3,3.2 116.3,26.6 118.0,3.2 118.8,3.2 121.0,3.2 122.8,26.6 124.6,3.2 125.3,3.2 127.6,3.2 129.4,26.6 131.2,3.2 131.9,0.6 134.1,3.2 136.0,26.6 137.8,3.2 138.5,3.2 140.7,3.2 142.6,28.2 144.3,3.2 145.0,0.6 147.3,3.2 149.1,28.2 150.9,3.2 151.6,0.6 153.8,3.2 155.7,26.6 157.5,3.2 158.2,3.2 161.3,3.2 162.3,26.6 164.0,3.2 164.7,3.2 167.0,3.2 168.8,28.2 170.6,3.2 171.3,3.2 174.5,3.2 175.4,26.6 177.2,3.2 177.9,3.2 180.1,3.2 182.0,26.6 183.7,3.2 184.4,3.2 187.6,3.2 188.5,26.6 190.3,3.2 191.0,3.2 193.2,3.2 195.1,28.2 196.9,3.2 197.6,3.2 200.7,3.2 201.7,26.6 203.5,3.2 204.2,3.2 206.4,3.2 208.3,26.6 210.0,3.2 210.7,0.6 213.0,3.2 214.8,26.6 216.6,3.2 217.3,3.2 219.5,3.2 221.4,26.6 223.2,3.2 223.9,3.2 226.1,3.2 228.0,26.6 229.7,3.2 230.4,3.2 232.7,3.2 234.5,26.6 236.3,3.2 235.7,3.2 235.7,23.6" fill="none" stroke="#3b78b3" stroke-width="2.2" stroke-linejoin="miter" stroke-miterlimit="2"/></g>
<g transform="translate(1922.50 985.00)"><polygon points="0.0,30.2 1.0,30.2 1.5,1.2 1.9,1.2 3.2,30.2 7.6,30.2 8.1,1.2 8.5,1.2 9.8,30.2 14.1,30.2 14.6,1.2 15.0,1.2 16.3,30.2 20.7,30.2 21.2,1.2 21.6,1.2 22.9,30.2 27.3,30.2 27.8,1.2 28.2,1.2 29.5,30.2 33.8,30.2 34.3,1.2 34.7,1.2 36.0,30.2 40.4,30.2 40.9,1.2 41.3,1.2 42.6,30.2 47.0,30.2 47.5,1.2 47.9,1.2 49.2,30.2 53.6,30.2 54.1,1.2 54.5,1.2 55.8,30.2 60.1,30.2 60.6,1.2 61.0,1.2 62.3,30.2 66.7,30.2 67.2,1.2 67.6,1.2 68.9,30.2 73.3,30.2 73.8,1.2 74.2,1.2 75.5,30.2 79.8,30.2 80.3,1.2 80.7,1.2 82.0,30.2 86.4,30.2 86.9,1.2 87.3,1.2 88.6,30.2 93.0,30.2 93.5,1.2 93.9,1.2 95.2,30.2 99.5,30.2 100.0,1.2 100.4,1.2 101.7,30.2 106.1,30.2 106.6,1.2 107.0,1.2 108.3,30.2 112.7,30.2 113.2,1.2 113.6,1.2 114.9,30.2 119.2,30.2 119.8,1.2 120.2,1.2 121.5,30.2 125.8,30.2 126.3,1.2 126.7,1.2 128.0,30.2 132.4,30.2 132.9,1.2 133.3,1.2 134.6,30.2 139.0,30.2 139.5,1.2 139.9,1.2 141.2,30.2 145.5,30.2 146.0,1.2 146.4,1.2 147.7,30.2 152.1,30.2 152.6,1.2 153.0,1.2 154.3,30.2 158.7,30.2 159.2,1.2 159.6,1.2 160.9,30.2 165.2,30.2 165.7,1.2 166.1,1.2 167.4,30.2 171.8,30.2 172.3,1.2 172.7,1.2 174.0,30.2 178.4,30.2 178.9,1.2 179.3,1.2 180.6,30.2 184.9,30.2 185.4,1.2 185.8,1.2 187.1,30.2 191.5,30.2 192.0,1.2 192.4,1.2 193.7,30.2 198.1,30.2 198.6,1.2 199.0,1.2 200.3,30.2 204.7,30.2 205.2,1.2 205.6,1.2 206.9,30.2 211.2,30.2 211.7,1.2 212.1,1.2 213.4,30.2 217.8,30.2 218.3,1.2 218.7,1.2 220.0,30.2 224.4,30.2 224.9,1.2 225.3,1.2 226.6,30.2 230.9,30.2 231.4,1.2 231.8,1.2 233.1,30.2 236.5,30.2" fill="#c8daeb"/><polyline points="0.0,30.2 1.0,30.2 1.5,1.2 1.9,1.2 3.2,30.2 7.6,30.2 8.1,1.2 8.5,1.2 9.8,30.2 14.1,30.2 14.6,1.2 15.0,1.2 16.3,30.2 20.7,30.2 21.2,1.2 21.6,1.2 22.9,30.2 27.3,30.2 27.8,1.2 28.2,1.2 29.5,30.2 33.8,30.2 34.3,1.2 34.7,1.2 36.0,30.2 40.4,30.2 40.9,1.2 41.3,1.2 42.6,30.2 47.0,30.2 47.5,1.2 47.9,1.2 49.2,30.2 53.6,30.2 54.1,1.2 54.5,1.2 55.8,30.2 60.1,30.2 60.6,1.2 61.0,1.2 62.3,30.2 66.7,30.2 67.2,1.2 67.6,1.2 68.9,30.2 73.3,30.2 73.8,1.2 74.2,1.2 75.5,30.2 79.8,30.2 80.3,1.2 80.7,1.2 82.0,30.2 86.4,30.2 86.9,1.2 87.3,1.2 88.6,30.2 93.0,30.2 93.5,1.2 93.9,1.2 95.2,30.2 99.5,30.2 100.0,1.2 100.4,1.2 101.7,30.2 106.1,30.2 106.6,1.2 107.0,1.2 108.3,30.2 112.7,30.2 113.2,1.2 113.6,1.2 114.9,30.2 119.2,30.2 119.8,1.2 120.2,1.2 121.5,30.2 125.8,30.2 126.3,1.2 126.7,1.2 128.0,30.2 132.4,30.2 132.9,1.2 133.3,1.2 134.6,30.2 139.0,30.2 139.5,1.2 139.9,1.2 141.2,30.2 145.5,30.2 146.0,1.2 146.4,1.2 147.7,30.2 152.1,30.2 152.6,1.2 153.0,1.2 154.3,30.2 158.7,30.2 159.2,1.2 159.6,1.2 160.9,30.2 165.2,30.2 165.7,1.2 166.1,1.2 167.4,30.2 171.8,30.2 172.3,1.2 172.7,1.2 174.0,30.2 178.4,30.2 178.9,1.2 179.3,1.2 180.6,30.2 184.9,30.2 185.4,1.2 185.8,1.2 187.1,30.2 191.5,30.2 192.0,1.2 192.4,1.2 193.7,30.2 198.1,30.2 198.6,1.2 199.0,1.2 200.3,30.2 204.7,30.2 205.2,1.2 205.6,1.2 206.9,30.2 211.2,30.2 211.7,1.2 212.1,1.2 213.4,30.2 217.8,30.2 218.3,1.2 218.7,1.2 220.0,30.2 224.4,30.2 224.9,1.2 225.3,1.2 226.6,30.2 230.9,30.2 231.4,1.2 231.8,1.2 233.1,30.2 236.5,30.2" fill="none" stroke="#3b78b3" stroke-width="2.0" stroke-linejoin="miter" stroke-miterlimit="2"/></g>
<g transform="translate(2396.50 985.00)"><polygon points="0.0,30.2 1.0,30.2 1.5,1.2 1.9,1.2 3.2,30.2 7.6,30.2 8.1,1.2 8.5,1.2 9.8,30.2 14.1,30.2 14.6,1.2 15.0,1.2 16.3,30.2 20.7,30.2 21.2,1.2 21.6,1.2 22.9,30.2 27.3,30.2 27.8,1.2 28.2,1.2 29.5,30.2 33.8,30.2 34.3,1.2 34.7,1.2 36.0,30.2 40.4,30.2 40.9,1.2 41.3,1.2 42.6,30.2 47.0,30.2 47.5,1.2 47.9,1.2 49.2,30.2 53.6,30.2 54.1,1.2 54.5,1.2 55.8,30.2 60.1,30.2 60.6,1.2 61.0,1.2 62.3,30.2 66.7,30.2 67.2,1.2 67.6,1.2 68.9,30.2 73.3,30.2 73.8,1.2 74.2,1.2 75.5,30.2 79.8,30.2 80.3,1.2 80.7,1.2 82.0,30.2 86.4,30.2 86.9,1.2 87.3,1.2 88.6,30.2 93.0,30.2 93.5,1.2 93.9,1.2 95.2,30.2 99.5,30.2 100.0,1.2 100.4,1.2 101.7,30.2 106.1,30.2 106.6,1.2 107.0,1.2 108.3,30.2 112.7,30.2 113.2,1.2 113.6,1.2 114.9,30.2 119.2,30.2 119.8,1.2 120.2,1.2 121.5,30.2 125.8,30.2 126.3,1.2 126.7,1.2 128.0,30.2 132.4,30.2 132.9,1.2 133.3,1.2 134.6,30.2 139.0,30.2 139.5,1.2 139.9,1.2 141.2,30.2 145.5,30.2 146.0,1.2 146.4,1.2 147.7,30.2 152.1,30.2 152.6,1.2 153.0,1.2 154.3,30.2 158.7,30.2 159.2,1.2 159.6,1.2 160.9,30.2 165.2,30.2 165.7,1.2 166.1,1.2 167.4,30.2 171.8,30.2 172.3,1.2 172.7,1.2 174.0,30.2 178.4,30.2 178.9,1.2 179.3,1.2 180.6,30.2 184.9,30.2 185.4,1.2 185.8,1.2 187.1,30.2 191.5,30.2 192.0,1.2 192.4,1.2 193.7,30.2 198.1,30.2 198.6,1.2 199.0,1.2 200.3,30.2 204.7,30.2 205.2,1.2 205.6,1.2 206.9,30.2 211.2,30.2 211.7,1.2 212.1,1.2 213.4,30.2 217.8,30.2 218.3,1.2 218.7,1.2 220.0,30.2 224.4,30.2 224.9,1.2 225.3,1.2 226.6,30.2 230.9,30.2 231.4,1.2 231.8,1.2 233.1,30.2 236.5,30.2" fill="#c8daeb"/><polyline points="0.0,30.2 1.0,30.2 1.5,1.2 1.9,1.2 3.2,30.2 7.6,30.2 8.1,1.2 8.5,1.2 9.8,30.2 14.1,30.2 14.6,1.2 15.0,1.2 16.3,30.2 20.7,30.2 21.2,1.2 21.6,1.2 22.9,30.2 27.3,30.2 27.8,1.2 28.2,1.2 29.5,30.2 33.8,30.2 34.3,1.2 34.7,1.2 36.0,30.2 40.4,30.2 40.9,1.2 41.3,1.2 42.6,30.2 47.0,30.2 47.5,1.2 47.9,1.2 49.2,30.2 53.6,30.2 54.1,1.2 54.5,1.2 55.8,30.2 60.1,30.2 60.6,1.2 61.0,1.2 62.3,30.2 66.7,30.2 67.2,1.2 67.6,1.2 68.9,30.2 73.3,30.2 73.8,1.2 74.2,1.2 75.5,30.2 79.8,30.2 80.3,1.2 80.7,1.2 82.0,30.2 86.4,30.2 86.9,1.2 87.3,1.2 88.6,30.2 93.0,30.2 93.5,1.2 93.9,1.2 95.2,30.2 99.5,30.2 100.0,1.2 100.4,1.2 101.7,30.2 106.1,30.2 106.6,1.2 107.0,1.2 108.3,30.2 112.7,30.2 113.2,1.2 113.6,1.2 114.9,30.2 119.2,30.2 119.8,1.2 120.2,1.2 121.5,30.2 125.8,30.2 126.3,1.2 126.7,1.2 128.0,30.2 132.4,30.2 132.9,1.2 133.3,1.2 134.6,30.2 139.0,30.2 139.5,1.2 139.9,1.2 141.2,30.2 145.5,30.2 146.0,1.2 146.4,1.2 147.7,30.2 152.1,30.2 152.6,1.2 153.0,1.2 154.3,30.2 158.7,30.2 159.2,1.2 159.6,1.2 160.9,30.2 165.2,30.2 165.7,1.2 166.1,1.2 167.4,30.2 171.8,30.2 172.3,1.2 172.7,1.2 174.0,30.2 178.4,30.2 178.9,1.2 179.3,1.2 180.6,30.2 184.9,30.2 185.4,1.2 185.8,1.2 187.1,30.2 191.5,30.2 192.0,1.2 192.4,1.2 193.7,30.2 198.1,30.2 198.6,1.2 199.0,1.2 200.3,30.2 204.7,30.2 205.2,1.2 205.6,1.2 206.9,30.2 211.2,30.2 211.7,1.2 212.1,1.2 213.4,30.2 217.8,30.2 218.3,1.2 218.7,1.2 220.0,30.2 224.4,30.2 224.9,1.2 225.3,1.2 226.6,30.2 230.9,30.2 231.4,1.2 231.8,1.2 233.1,30.2 236.5,30.2" fill="none" stroke="#3b78b3" stroke-width="2.0" stroke-linejoin="miter" stroke-miterlimit="2"/></g>
<rect x="3047.57" y="828.38" width="242.85" height="329.85" rx="0.00" fill="none" stroke="#e8441c" stroke-width="4.75" />
</svg>
<div class="a" id="txt" style="left:0;top:0;width:3740px;height:1188px;will-change:transform;">
<span class="a t" id="t0" style="left:9.55px;top:8.72px;font-size:34px;line-height:44px;color:#296fdb;-webkit-text-stroke:0.3px;transform:scaleX(0.9479);transform-origin:0 0;">apg-testcluster-02-instance-writer</span>
<span class="a t" id="t1" style="left:552.04px;top:14.88px;font-size:22px;line-height:29px;color:#0f141a;font-weight:700;-webkit-text-stroke:0.2px;transform:scaleX(0.9650);transform-origin:0 0;">Note:</span>
<span class="a t" id="t2" style="left:619.50px;top:14.88px;font-size:22px;line-height:29px;color:#424650;-webkit-text-stroke:0.3px;transform:scaleX(0.9563);transform-origin:0 0;">All times are shown in UTC.</span>
<span class="a t" id="t3" style="left:2470.19px;top:17.88px;font-size:22px;line-height:29px;color:#0f141a;-webkit-text-stroke:0.3px;transform:scaleX(1.0631);transform-origin:0 0;">Pin to top</span>
<span class="a t" id="t4" style="left:2633.26px;top:17.88px;font-size:22px;line-height:29px;color:#0f141a;-webkit-text-stroke:0.3px;transform:scaleX(0.9931);transform-origin:0 0;">Engine:</span>
<span class="a t" id="t5" style="left:2720.50px;top:17.88px;font-size:22px;line-height:29px;color:#0f141a;font-weight:700;-webkit-text-stroke:0.2px;transform:scaleX(0.9637);transform-origin:0 0;">Aurora PostgreSQL</span>
<span class="a t" id="t6" style="left:2983.00px;top:17.88px;font-size:22px;line-height:29px;color:#0f141a;-webkit-text-stroke:0.3px;transform:scaleX(1.0041);transform-origin:0 0;">Version:</span>
<span class="a t" id="t7" style="left:3074.95px;top:17.88px;font-size:22px;line-height:29px;color:#0f141a;font-weight:700;-webkit-text-stroke:0.2px;transform:scaleX(1.0461);transform-origin:0 0;">15.5</span>
<span class="a t" id="t8" style="left:3183.74px;top:17.88px;font-size:22px;line-height:29px;color:#0f141a;-webkit-text-stroke:0.3px;transform:scaleX(0.9552);transform-origin:0 0;">Size:</span>
<span class="a t" id="t9" style="left:3243.10px;top:17.88px;font-size:22px;line-height:29px;color:#0f141a;font-weight:700;-webkit-text-stroke:0.2px;transform:scaleX(1.0238);transform-origin:0 0;">db.t4g.medium</span>
<span class="a t" id="t10" style="left:3532.80px;top:18.28px;font-size:22px;line-height:29px;color:#296fdb;font-weight:700;-webkit-text-stroke:0.2px;transform:scaleX(1.0010);transform-origin:0 0;">Explore Related</span>
<span class="a t" id="t11" style="left:42.55px;top:105.51px;font-size:31px;line-height:40px;color:#0f141a;font-weight:700;-webkit-text-stroke:0.2px;transform:scaleX(0.9770);transform-origin:0 0;">Database load</span>
<span class="a t" id="t12" style="left:259.43px;top:117.84px;font-size:18.5px;line-height:24px;color:#296fdb;font-weight:700;-webkit-text-stroke:0.2px;transform:scaleX(1.0736);transform-origin:0 0;">Info</span>
<span class="a t" id="t13" style="left:416.05px;top:111.63px;font-size:22px;line-height:29px;color:#0f141a;-webkit-text-stroke:0.3px;transform:scaleX(0.9488);transform-origin:0 0;">Sliced by</span>
<span class="a t" id="t14" style="left:573.02px;top:107.88px;font-size:22px;line-height:29px;color:#0f141a;-webkit-text-stroke:0.3px;transform:scaleX(0.9809);transform-origin:0 0;">Plans</span>
<span class="a t" id="t15" style="left:778.55px;top:107.88px;font-size:22px;line-height:29px;color:#fff;font-weight:700;-webkit-text-stroke:0.2px;transform:scaleX(0.9481);transform-origin:0 0;">Bar</span>
<span class="a t" id="t16" style="left:887.01px;top:107.88px;font-size:22px;line-height:29px;color:#424650;font-weight:700;-webkit-text-stroke:0.2px;transform:scaleX(0.9946);transform-origin:0 0;">Line</span>
<span class="a t" id="t17" style="left:3231.92px;top:104.58px;font-size:22px;line-height:29px;color:#0f141a;-webkit-text-stroke:0.3px;transform:scaleX(0.9794);transform-origin:0 0;">Show max vCPU</span>
<span class="a t" id="t18" style="left:3442.20px;top:104.58px;font-size:22px;line-height:29px;color:#296fdb;font-weight:700;-webkit-text-stroke:0.2px;transform:scaleX(1.0045);transform-origin:0 0;">Analyze performance</span>
<span class="a t" id="t19" style="left:50.50px;top:188.34px;font-size:18.5px;line-height:24px;color:#424650;-webkit-text-stroke:0.3px;transform:scaleX(0.9873);transform-origin:0 0;">Average active sessions (AAS)</span>
<span class="a t" id="t20" style="left:70.75px;top:231.01px;font-size:18px;line-height:23px;color:#000;-webkit-text-stroke:0.3px;transform:scaleX(1.0395);transform-origin:0 0;">2.0</span>
<span class="a t" id="t21" style="left:69.67px;top:309.76px;font-size:18px;line-height:23px;color:#000;-webkit-text-stroke:0.3px;transform:scaleX(1.0828);transform-origin:0 0;">1.0</span>
<span class="a t" id="t22" style="left:86.75px;top:388.51px;font-size:18px;line-height:23px;color:#000;-webkit-text-stroke:0.3px;">0</span>
<span class="a t" id="t23" style="left:148.48px;top:408.26px;font-size:18px;line-height:23px;color:#000;-webkit-text-stroke:0.3px;transform:scaleX(1.0267);transform-origin:0 0;">Feb 13</span>
<span class="a t" id="t24" style="left:153.19px;top:427.66px;font-size:18px;line-height:23px;color:#000;-webkit-text-stroke:0.3px;transform:scaleX(1.0674);transform-origin:0 0;">14:55</span>
<span class="a t" id="t25" style="left:247.33px;top:408.26px;font-size:18px;line-height:23px;color:#000;-webkit-text-stroke:0.3px;transform:scaleX(1.0267);transform-origin:0 0;">Feb 13</span>
<span class="a t" id="t26" style="left:252.04px;top:427.66px;font-size:18px;line-height:23px;color:#000;-webkit-text-stroke:0.3px;transform:scaleX(1.0674);transform-origin:0 0;">15:00</span>
<span class="a t" id="t27" style="left:346.18px;top:408.26px;font-size:18px;line-height:23px;color:#000;-webkit-text-stroke:0.3px;transform:scaleX(1.0267);transform-origin:0 0;">Feb 13</span>
<span class="a t" id="t28" style="left:350.89px;top:427.66px;font-size:18px;line-height:23px;color:#000;-webkit-text-stroke:0.3px;transform:scaleX(1.0674);transform-origin:0 0;">15:05</span>
<span class="a t" id="t29" style="left:445.03px;top:408.26px;font-size:18px;line-height:23px;color:#000;-webkit-text-stroke:0.3px;transform:scaleX(1.0267);transform-origin:0 0;">Feb 13</span>
<span class="a t" id="t30" style="left:449.74px;top:427.66px;font-size:18px;line-height:23px;color:#000;-webkit-text-stroke:0.3px;transform:scaleX(1.0674);transform-origin:0 0;">15:10</span>
<span class="a t" id="t31" style="left:543.88px;top:408.26px;font-size:18px;line-height:23px;color:#000;-webkit-text-stroke:0.3px;transform:scaleX(1.0267);transform-origin:0 0;">Feb 13</span>
<span class="a t" id="t32" style="left:548.59px;top:427.66px;font-size:18px;line-height:23px;color:#000;-webkit-text-stroke:0.3px;transform:scaleX(1.0674);transform-origin:0 0;">15:15</span>
<span class="a t" id="t33" style="left:642.73px;top:408.26px;font-size:18px;line-height:23px;color:#000;-webkit-text-stroke:0.3px;transform:scaleX(1.0267);transform-origin:0 0;">Feb 13</span>
<span class="a t" id="t34" style="left:647.44px;top:427.66px;font-size:18px;line-height:23px;color:#000;-webkit-text-stroke:0.3px;transform:scaleX(1.0674);transform-origin:0 0;">15:20</span>
<span class="a t" id="t35" style="left:741.58px;top:408.26px;font-size:18px;line-height:23px;color:#000;-webkit-text-stroke:0.3px;transform:scaleX(1.0267);transform-origin:0 0;">Feb 13</span>
<span class="a t" id="t36" style="left:746.29px;top:427.66px;font-size:18px;line-height:23px;color:#000;-webkit-text-stroke:0.3px;transform:scaleX(1.0674);transform-origin:0 0;">15:25</span>
<span class="a t" id="t37" style="left:840.43px;top:408.26px;font-size:18px;line-height:23px;color:#000;-webkit-text-stroke:0.3px;transform:scaleX(1.0267);transform-origin:0 0;">Feb 13</span>
<span class="a t" id="t38" style="left:845.14px;top:427.66px;font-size:18px;line-height:23px;color:#000;-webkit-text-stroke:0.3px;transform:scaleX(1.0674);transform-origin:0 0;">15:30</span>
<span class="a t" id="t39" style="left:939.28px;top:408.26px;font-size:18px;line-height:23px;color:#000;-webkit-text-stroke:0.3px;transform:scaleX(1.0267);transform-origin:0 0;">Feb 13</span>
<span class="a t" id="t40" style="left:943.99px;top:427.66px;font-size:18px;line-height:23px;color:#000;-webkit-text-stroke:0.3px;transform:scaleX(1.0674);transform-origin:0 0;">15:35</span>
<span class="a t" id="t41" style="left:1038.13px;top:408.26px;font-size:18px;line-height:23px;color:#000;-webkit-text-stroke:0.3px;transform:scaleX(1.0267);transform-origin:0 0;">Feb 13</span>
<span class="a t" id="t42" style="left:1042.84px;top:427.66px;font-size:18px;line-height:23px;color:#000;-webkit-text-stroke:0.3px;transform:scaleX(1.0674);transform-origin:0 0;">15:40</span>
<span class="a t" id="t43" style="left:1136.98px;top:408.26px;font-size:18px;line-height:23px;color:#000;-webkit-text-stroke:0.3px;transform:scaleX(1.0267);transform-origin:0 0;">Feb 13</span>
<span class="a t" id="t44" style="left:1141.69px;top:427.66px;font-size:18px;line-height:23px;color:#000;-webkit-text-stroke:0.3px;transform:scaleX(1.0674);transform-origin:0 0;">15:45</span>
<span class="a t" id="t45" style="left:1235.83px;top:408.26px;font-size:18px;line-height:23px;color:#000;-webkit-text-stroke:0.3px;transform:scaleX(1.0267);transform-origin:0 0;">Feb 13</span>
<span class="a t" id="t46" style="left:1240.54px;top:427.66px;font-size:18px;line-height:23px;color:#000;-webkit-text-stroke:0.3px;transform:scaleX(1.0674);transform-origin:0 0;">15:50</span>
<span class="a t" id="t47" style="left:1334.68px;top:408.26px;font-size:18px;line-height:23px;color:#000;-webkit-text-stroke:0.3px;transform:scaleX(1.0267);transform-origin:0 0;">Feb 13</span>
<span class="a t" id="t48" style="left:1339.39px;top:427.66px;font-size:18px;line-height:23px;color:#000;-webkit-text-stroke:0.3px;transform:scaleX(1.0674);transform-origin:0 0;">15:55</span>
<span class="a t" id="t49" style="left:1433.53px;top:408.26px;font-size:18px;line-height:23px;color:#000;-webkit-text-stroke:0.3px;transform:scaleX(1.0267);transform-origin:0 0;">Feb 13</span>
<span class="a t" id="t50" style="left:1438.24px;top:427.66px;font-size:18px;line-height:23px;color:#000;-webkit-text-stroke:0.3px;transform:scaleX(1.0674);transform-origin:0 0;">16:00</span>
<span class="a t" id="t51" style="left:1532.38px;top:408.26px;font-size:18px;line-height:23px;color:#000;-webkit-text-stroke:0.3px;transform:scaleX(1.0267);transform-origin:0 0;">Feb 13</span>
<span class="a t" id="t52" style="left:1537.09px;top:427.66px;font-size:18px;line-height:23px;color:#000;-webkit-text-stroke:0.3px;transform:scaleX(1.0674);transform-origin:0 0;">16:05</span>
<span class="a t" id="t53" style="left:1631.23px;top:408.26px;font-size:18px;line-height:23px;color:#000;-webkit-text-stroke:0.3px;transform:scaleX(1.0267);transform-origin:0 0;">Feb 13</span>
<span class="a t" id="t54" style="left:1635.94px;top:427.66px;font-size:18px;line-height:23px;color:#000;-webkit-text-stroke:0.3px;transform:scaleX(1.0674);transform-origin:0 0;">16:10</span>
<span class="a t" id="t55" style="left:1730.08px;top:408.26px;font-size:18px;line-height:23px;color:#000;-webkit-text-stroke:0.3px;transform:scaleX(1.0267);transform-origin:0 0;">Feb 13</span>
<span class="a t" id="t56" style="left:1734.79px;top:427.66px;font-size:18px;line-height:23px;color:#000;-webkit-text-stroke:0.3px;transform:scaleX(1.0674);transform-origin:0 0;">16:15</span>
<span class="a t" id="t57" style="left:1828.93px;top:408.26px;font-size:18px;line-height:23px;color:#000;-webkit-text-stroke:0.3px;transform:scaleX(1.0267);transform-origin:0 0;">Feb 13</span>
<span class="a t" id="t58" style="left:1833.64px;top:427.66px;font-size:18px;line-height:23px;color:#000;-webkit-text-stroke:0.3px;transform:scaleX(1.0674);transform-origin:0 0;">16:20</span>
<span class="a t" id="t59" style="left:1927.78px;top:408.26px;font-size:18px;line-height:23px;color:#000;-webkit-text-stroke:0.3px;transform:scaleX(1.0267);transform-origin:0 0;">Feb 13</span>
<span class="a t" id="t60" style="left:1932.49px;top:427.66px;font-size:18px;line-height:23px;color:#000;-webkit-text-stroke:0.3px;transform:scaleX(1.0674);transform-origin:0 0;">16:25</span>
<span class="a t" id="t61" style="left:2026.63px;top:408.26px;font-size:18px;line-height:23px;color:#000;-webkit-text-stroke:0.3px;transform:scaleX(1.0267);transform-origin:0 0;">Feb 13</span>
<span class="a t" id="t62" style="left:2031.34px;top:427.66px;font-size:18px;line-height:23px;color:#000;-webkit-text-stroke:0.3px;transform:scaleX(1.0674);transform-origin:0 0;">16:30</span>
<span class="a t" id="t63" style="left:2125.48px;top:408.26px;font-size:18px;line-height:23px;color:#000;-webkit-text-stroke:0.3px;transform:scaleX(1.0267);transform-origin:0 0;">Feb 13</span>
<span class="a t" id="t64" style="left:2130.19px;top:427.66px;font-size:18px;line-height:23px;color:#000;-webkit-text-stroke:0.3px;transform:scaleX(1.0674);transform-origin:0 0;">16:35</span>
<span class="a t" id="t65" style="left:2224.33px;top:408.26px;font-size:18px;line-height:23px;color:#000;-webkit-text-stroke:0.3px;transform:scaleX(1.0267);transform-origin:0 0;">Feb 13</span>
<span class="a t" id="t66" style="left:2229.04px;top:427.66px;font-size:18px;line-height:23px;color:#000;-webkit-text-stroke:0.3px;transform:scaleX(1.0674);transform-origin:0 0;">16:40</span>
<span class="a t" id="t67" style="left:2323.18px;top:408.26px;font-size:18px;line-height:23px;color:#000;-webkit-text-stroke:0.3px;transform:scaleX(1.0267);transform-origin:0 0;">Feb 13</span>
<span class="a t" id="t68" style="left:2327.89px;top:427.66px;font-size:18px;line-height:23px;color:#000;-webkit-text-stroke:0.3px;transform:scaleX(1.0674);transform-origin:0 0;">16:45</span>
<span class="a t" id="t69" style="left:2422.03px;top:408.26px;font-size:18px;line-height:23px;color:#000;-webkit-text-stroke:0.3px;transform:scaleX(1.0267);transform-origin:0 0;">Feb 13</span>
<span class="a t" id="t70" style="left:2426.74px;top:427.66px;font-size:18px;line-height:23px;color:#000;-webkit-text-stroke:0.3px;transform:scaleX(1.0674);transform-origin:0 0;">16:50</span>
<span class="a t" id="t71" style="left:2520.88px;top:408.26px;font-size:18px;line-height:23px;color:#000;-webkit-text-stroke:0.3px;transform:scaleX(1.0267);transform-origin:0 0;">Feb 13</span>
<span class="a t" id="t72" style="left:2525.59px;top:427.66px;font-size:18px;line-height:23px;color:#000;-webkit-text-stroke:0.3px;transform:scaleX(1.0674);transform-origin:0 0;">16:55</span>
<span class="a t" id="t73" style="left:2619.73px;top:408.26px;font-size:18px;line-height:23px;color:#000;-webkit-text-stroke:0.3px;transform:scaleX(1.0267);transform-origin:0 0;">Feb 13</span>
<span class="a t" id="t74" style="left:2624.44px;top:427.66px;font-size:18px;line-height:23px;color:#000;-webkit-text-stroke:0.3px;transform:scaleX(1.0674);transform-origin:0 0;">17:00</span>
<span class="a t" id="t75" style="left:2718.58px;top:408.26px;font-size:18px;line-height:23px;color:#000;-webkit-text-stroke:0.3px;transform:scaleX(1.0267);transform-origin:0 0;">Feb 13</span>
<span class="a t" id="t76" style="left:2723.29px;top:427.66px;font-size:18px;line-height:23px;color:#000;-webkit-text-stroke:0.3px;transform:scaleX(1.0674);transform-origin:0 0;">17:05</span>
<span class="a t" id="t77" style="left:2817.43px;top:408.26px;font-size:18px;line-height:23px;color:#000;-webkit-text-stroke:0.3px;transform:scaleX(1.0267);transform-origin:0 0;">Feb 13</span>
<span class="a t" id="t78" style="left:2822.14px;top:427.66px;font-size:18px;line-height:23px;color:#000;-webkit-text-stroke:0.3px;transform:scaleX(1.0674);transform-origin:0 0;">17:10</span>
<span class="a t" id="t79" style="left:2916.28px;top:408.26px;font-size:18px;line-height:23px;color:#000;-webkit-text-stroke:0.3px;transform:scaleX(1.0267);transform-origin:0 0;">Feb 13</span>
<span class="a t" id="t80" style="left:2920.99px;top:427.66px;font-size:18px;line-height:23px;color:#000;-webkit-text-stroke:0.3px;transform:scaleX(1.0674);transform-origin:0 0;">17:15</span>
<span class="a t" id="t81" style="left:3015.13px;top:408.26px;font-size:18px;line-height:23px;color:#000;-webkit-text-stroke:0.3px;transform:scaleX(1.0267);transform-origin:0 0;">Feb 13</span>
<span class="a t" id="t82" style="left:3019.84px;top:427.66px;font-size:18px;line-height:23px;color:#000;-webkit-text-stroke:0.3px;transform:scaleX(1.0674);transform-origin:0 0;">17:20</span>
<span class="a t" id="t83" style="left:3113.98px;top:408.26px;font-size:18px;line-height:23px;color:#000;-webkit-text-stroke:0.3px;transform:scaleX(1.0267);transform-origin:0 0;">Feb 13</span>
<span class="a t" id="t84" style="left:3118.69px;top:427.66px;font-size:18px;line-height:23px;color:#000;-webkit-text-stroke:0.3px;transform:scaleX(1.0674);transform-origin:0 0;">17:25</span>
<span class="a t" id="t85" style="left:3212.83px;top:408.26px;font-size:18px;line-height:23px;color:#000;-webkit-text-stroke:0.3px;transform:scaleX(1.0267);transform-origin:0 0;">Feb 13</span>
<span class="a t" id="t86" style="left:3217.54px;top:427.66px;font-size:18px;line-height:23px;color:#000;-webkit-text-stroke:0.3px;transform:scaleX(1.0674);transform-origin:0 0;">17:30</span>
<span class="a t" id="t87" style="left:3311.68px;top:408.26px;font-size:18px;line-height:23px;color:#000;-webkit-text-stroke:0.3px;transform:scaleX(1.0267);transform-origin:0 0;">Feb 13</span>
<span class="a t" id="t88" style="left:3316.39px;top:427.66px;font-size:18px;line-height:23px;color:#000;-webkit-text-stroke:0.3px;transform:scaleX(1.0674);transform-origin:0 0;">17:35</span>
<span class="a t" id="t89" style="left:3410.53px;top:408.26px;font-size:18px;line-height:23px;color:#000;-webkit-text-stroke:0.3px;transform:scaleX(1.0267);transform-origin:0 0;">Feb 13</span>
<span class="a t" id="t90" style="left:3415.24px;top:427.66px;font-size:18px;line-height:23px;color:#000;-webkit-text-stroke:0.3px;transform:scaleX(1.0674);transform-origin:0 0;">17:40</span>
<span class="a t" id="t91" style="left:3509.38px;top:408.26px;font-size:18px;line-height:23px;color:#000;-webkit-text-stroke:0.3px;transform:scaleX(1.0267);transform-origin:0 0;">Feb 13</span>
<span class="a t" id="t92" style="left:3514.09px;top:427.66px;font-size:18px;line-height:23px;color:#000;-webkit-text-stroke:0.3px;transform:scaleX(1.0674);transform-origin:0 0;">17:45</span>
<span class="a t" id="t93" style="left:3608.23px;top:408.26px;font-size:18px;line-height:23px;color:#000;-webkit-text-stroke:0.3px;transform:scaleX(1.0267);transform-origin:0 0;">Feb 13</span>
<span class="a t" id="t94" style="left:3612.94px;top:427.66px;font-size:18px;line-height:23px;color:#000;-webkit-text-stroke:0.3px;transform:scaleX(1.0674);transform-origin:0 0;">17:50</span>
<span class="a t" id="t95" style="left:75.75px;top:454.09px;font-size:18.5px;line-height:24px;color:#424650;-webkit-text-stroke:0.3px;transform:scaleX(1.0804);transform-origin:0 0;">-1765646790</span>
<span class="a t" id="t96" style="left:236.50px;top:454.09px;font-size:18.5px;line-height:24px;color:#424650;-webkit-text-stroke:0.3px;">1</span>
<span class="a t" id="t97" style="left:291.44px;top:454.09px;font-size:18.5px;line-height:24px;color:#424650;-webkit-text-stroke:0.3px;transform:scaleX(1.0615);transform-origin:0 0;">Unknown</span>
<span class="a t" id="t98" style="left:42.01px;top:555.43px;font-size:24px;line-height:31px;color:#296fdb;font-weight:700;-webkit-text-stroke:0.2px;transform:scaleX(0.9929);transform-origin:0 0;">DB Load Analysis</span>
<span class="a t" id="t99" style="left:308.95px;top:555.43px;font-size:24px;line-height:31px;color:#424650;font-weight:700;-webkit-text-stroke:0.2px;transform:scaleX(1.0461);transform-origin:0 0;">Database Telemetry</span>
<span class="a t" id="t100" style="left:609.73px;top:555.43px;font-size:24px;line-height:31px;color:#424650;font-weight:700;-webkit-text-stroke:0.2px;transform:scaleX(1.0209);transform-origin:0 0;">Performance Analysis</span>
<span class="a t" id="t101" style="left:932.50px;top:555.43px;font-size:24px;line-height:31px;color:#424650;font-weight:700;-webkit-text-stroke:0.2px;transform:scaleX(1.0023);transform-origin:0 0;">Calling Services</span>
<span class="a t" id="t102" style="left:42.76px;top:652.93px;font-size:24px;line-height:31px;color:#424650;font-weight:700;-webkit-text-stroke:0.2px;transform:scaleX(0.9887);transform-origin:0 0;">Lock Analysis</span>
<span class="a t" id="t103" style="left:254.25px;top:652.93px;font-size:24px;line-height:31px;color:#296fdb;font-weight:700;-webkit-text-stroke:0.2px;transform:scaleX(1.0124);transform-origin:0 0;">Top SQL</span>
<span class="a t" id="t104" style="left:417.50px;top:652.93px;font-size:24px;line-height:31px;color:#424650;font-weight:700;-webkit-text-stroke:0.2px;transform:scaleX(1.0365);transform-origin:0 0;">Top waits</span>
<span class="a t" id="t105" style="left:595.00px;top:652.93px;font-size:24px;line-height:31px;color:#424650;font-weight:700;-webkit-text-stroke:0.2px;transform:scaleX(1.0042);transform-origin:0 0;">Top hosts</span>
<span class="a t" id="t106" style="left:772.50px;top:652.93px;font-size:24px;line-height:31px;color:#424650;font-weight:700;-webkit-text-stroke:0.2px;transform:scaleX(0.9950);transform-origin:0 0;">Top users</span>
<span class="a t" id="t107" style="left:949.25px;top:652.93px;font-size:24px;line-height:31px;color:#424650;font-weight:700;-webkit-text-stroke:0.2px;transform:scaleX(0.9987);transform-origin:0 0;">Top session types</span>
<span class="a t" id="t108" style="left:1221.25px;top:652.93px;font-size:24px;line-height:31px;color:#424650;font-weight:700;-webkit-text-stroke:0.2px;transform:scaleX(1.0342);transform-origin:0 0;">Top applications</span>
<span class="a t" id="t109" style="left:1481.25px;top:652.93px;font-size:24px;line-height:31px;color:#424650;font-weight:700;-webkit-text-stroke:0.2px;transform:scaleX(1.0141);transform-origin:0 0;">Top databases</span>
<span class="a t" id="t110" style="left:44.50px;top:730.11px;font-size:30px;line-height:39px;color:#0f141a;font-weight:700;-webkit-text-stroke:0.2px;transform:scaleX(0.9740);transform-origin:0 0;">Top SQL</span>
<span class="a t" id="t111" style="left:172.25px;top:730.11px;font-size:30px;line-height:39px;color:#656871;-webkit-text-stroke:0.3px;transform:scaleX(1.0022);transform-origin:0 0;">(4)</span>
<span class="a t" id="t112" style="left:221.42px;top:742.26px;font-size:18px;line-height:23px;color:#296fdb;font-weight:700;-webkit-text-stroke:0.2px;transform:scaleX(1.0785);transform-origin:0 0;">Info</span>
<span class="a t" id="t113" style="left:103.75px;top:791.63px;font-size:22px;line-height:29px;color:#656871;-webkit-text-stroke:0.3px;font-style:italic;transform:scaleX(0.9823);transform-origin:0 0;">Find SQL statements</span>
<span class="a t" id="t114" style="left:3563.50px;top:791.88px;font-size:22px;line-height:29px;color:#0f141a;font-weight:700;-webkit-text-stroke:0.2px;">1</span>
<span class="a t" id="t115" style="left:125.29px;top:858.38px;font-size:22px;line-height:29px;color:#0f141a;font-weight:700;-webkit-text-stroke:0.2px;transform:scaleX(0.9647);transform-origin:0 0;">Load by plans (AAS)</span>
<span class="a t" id="t116" style="left:849.50px;top:858.38px;font-size:22px;line-height:29px;color:#424650;font-weight:700;-webkit-text-stroke:0.2px;transform:scaleX(0.9701);transform-origin:0 0;">SQL statements</span>
<span class="a t" id="t117" style="left:1923.75px;top:858.38px;font-size:22px;line-height:29px;color:#424650;font-weight:700;-webkit-text-stroke:0.2px;transform:scaleX(0.9536);transform-origin:0 0;">Calls/sec</span>
<span class="a t" id="t118" style="left:2396.04px;top:858.38px;font-size:22px;line-height:29px;color:#424650;font-weight:700;-webkit-text-stroke:0.2px;transform:scaleX(0.9575);transform-origin:0 0;">Rows/sec</span>
<span class="a t" id="t119" style="left:2870.50px;top:858.38px;font-size:22px;line-height:29px;color:#424650;font-weight:700;-webkit-text-stroke:0.2px;transform:scaleX(1.0250);transform-origin:0 0;">Avg lat...</span>
<span class="a t" id="t120" style="left:3059.01px;top:858.38px;font-size:22px;line-height:29px;color:#424650;font-weight:700;-webkit-text-stroke:0.2px;transform:scaleX(0.9851);transform-origin:0 0;">Plans count (unique)</span>
<span class="a t" id="t121" style="left:626.00px;top:922.88px;font-size:22px;line-height:29px;color:#0f141a;-webkit-text-stroke:0.3px;transform:scaleX(1.0239);transform-origin:0 0;">0.53</span>
<span class="a t" id="t122" style="left:239.25px;top:989.88px;font-size:22px;line-height:29px;color:#0f141a;-webkit-text-stroke:0.3px;transform:scaleX(1.0039);transform-origin:0 0;">0.03</span>
<span class="a t" id="t123" style="left:212.26px;top:1055.88px;font-size:22px;line-height:29px;color:#0f141a;-webkit-text-stroke:0.3px;transform:scaleX(0.9910);transform-origin:0 0;">&lt; 0.01</span>
<span class="a t" id="t124" style="left:212.26px;top:1120.88px;font-size:22px;line-height:29px;color:#0f141a;-webkit-text-stroke:0.3px;transform:scaleX(0.9910);transform-origin:0 0;">&lt; 0.01</span>
<span class="a t" id="t125" style="left:849.25px;top:922.88px;font-size:22px;line-height:29px;color:#0f141a;-webkit-text-stroke:0.3px;transform:scaleX(0.9390);transform-origin:0 0;">WITH RECURSIVE numbers(n) AS ( SELECT ? UNION ALL SELECT n + ? FROM num...</span>
<span class="a t" id="t126" style="left:848.32px;top:989.88px;font-size:22px;line-height:29px;color:#0f141a;-webkit-text-stroke:0.3px;transform:scaleX(0.9340);transform-origin:0 0;">SELECT pg_sleep(?)</span>
<span class="a t" id="t127" style="left:848.28px;top:1056.88px;font-size:22px;line-height:29px;color:#0f141a;-webkit-text-stroke:0.3px;transform:scaleX(0.9740);transform-origin:0 0;">SELECT wrong_column FROM wrong_table WHERE n % ? = ?</span>
<span class="a t" id="t128" style="left:849.25px;top:1121.88px;font-size:22px;line-height:29px;color:#0f141a;-webkit-text-stroke:0.3px;transform:scaleX(1.0086);transform-origin:0 0;">autovacuum: ANALYZE public.rds_heartbeat2</span>
<span class="a t" id="t129" style="left:2178.75px;top:925.88px;font-size:22px;line-height:29px;color:#0f141a;-webkit-text-stroke:0.3px;transform:scaleX(0.9981);transform-origin:0 0;">0.17</span>
<span class="a t" id="t130" style="left:2652.50px;top:925.88px;font-size:22px;line-height:29px;color:#0f141a;-webkit-text-stroke:0.3px;transform:scaleX(0.9981);transform-origin:0 0;">0.17</span>
<span class="a t" id="t131" style="left:2178.75px;top:993.63px;font-size:22px;line-height:29px;color:#0f141a;-webkit-text-stroke:0.3px;transform:scaleX(1.0039);transform-origin:0 0;">0.03</span>
<span class="a t" id="t132" style="left:2652.50px;top:993.63px;font-size:22px;line-height:29px;color:#0f141a;-webkit-text-stroke:0.3px;transform:scaleX(1.0039);transform-origin:0 0;">0.03</span>
<span class="a t" id="t133" style="left:2870.50px;top:922.88px;font-size:22px;line-height:29px;color:#0f141a;-webkit-text-stroke:0.3px;transform:scaleX(1.0279);transform-origin:0 0;">3204.48</span>
<span class="a t" id="t134" style="left:2869.46px;top:989.88px;font-size:22px;line-height:29px;color:#0f141a;-webkit-text-stroke:0.3px;transform:scaleX(1.0410);transform-origin:0 0;">1003.93</span>
<span class="a t" id="t135" style="left:1965.66px;top:1056.88px;font-size:22px;line-height:29px;color:#0f141a;-webkit-text-stroke:0.3px;transform:scaleX(1.0442);transform-origin:0 0;">No data found.</span>
<span class="a t" id="t136" style="left:2179.30px;top:1056.88px;font-size:22px;line-height:29px;color:#0f141a;-webkit-text-stroke:0.3px;">-</span>
<span class="a t" id="t137" style="left:2438.76px;top:1056.88px;font-size:22px;line-height:29px;color:#0f141a;-webkit-text-stroke:0.3px;transform:scaleX(1.0442);transform-origin:0 0;">No data found.</span>
<span class="a t" id="t138" style="left:2652.50px;top:1056.88px;font-size:22px;line-height:29px;color:#0f141a;-webkit-text-stroke:0.3px;">-</span>
<span class="a t" id="t139" style="left:2871.00px;top:1056.88px;font-size:22px;line-height:29px;color:#0f141a;-webkit-text-stroke:0.3px;">-</span>
<span class="a t" id="t140" style="left:1965.66px;top:1121.88px;font-size:22px;line-height:29px;color:#0f141a;-webkit-text-stroke:0.3px;transform:scaleX(1.0442);transform-origin:0 0;">No data found.</span>
<span class="a t" id="t141" style="left:2179.30px;top:1121.88px;font-size:22px;line-height:29px;color:#0f141a;-webkit-text-stroke:0.3px;">-</span>
<span class="a t" id="t142" style="left:2438.76px;top:1121.88px;font-size:22px;line-height:29px;color:#0f141a;-webkit-text-stroke:0.3px;transform:scaleX(1.0442);transform-origin:0 0;">No data found.</span>
<span class="a t" id="t143" style="left:2652.50px;top:1121.88px;font-size:22px;line-height:29px;color:#0f141a;-webkit-text-stroke:0.3px;">-</span>
<span class="a t" id="t144" style="left:2871.00px;top:1121.88px;font-size:22px;line-height:29px;color:#0f141a;-webkit-text-stroke:0.3px;">-</span>
<span class="a t" id="t145" style="left:3059.00px;top:922.88px;font-size:22px;line-height:29px;color:#296fdb;font-weight:700;-webkit-text-stroke:0.2px;transform:scaleX(1.0004);transform-origin:0 0;">1 plans</span>
<span class="a t" id="t146" style="left:3059.00px;top:989.88px;font-size:22px;line-height:29px;color:#296fdb;font-weight:700;-webkit-text-stroke:0.2px;transform:scaleX(1.0004);transform-origin:0 0;">1 plans</span>
<span class="a t" id="t147" style="left:3060.00px;top:1056.88px;font-size:22px;line-height:29px;color:#296fdb;font-weight:700;-webkit-text-stroke:0.2px;transform:scaleX(0.9871);transform-origin:0 0;">0 plans</span>
<span class="a t" id="t148" style="left:3060.00px;top:1121.88px;font-size:22px;line-height:29px;color:#296fdb;font-weight:700;-webkit-text-stroke:0.2px;transform:scaleX(0.9871);transform-origin:0 0;">0 plans</span>
</div>
</body></html>
